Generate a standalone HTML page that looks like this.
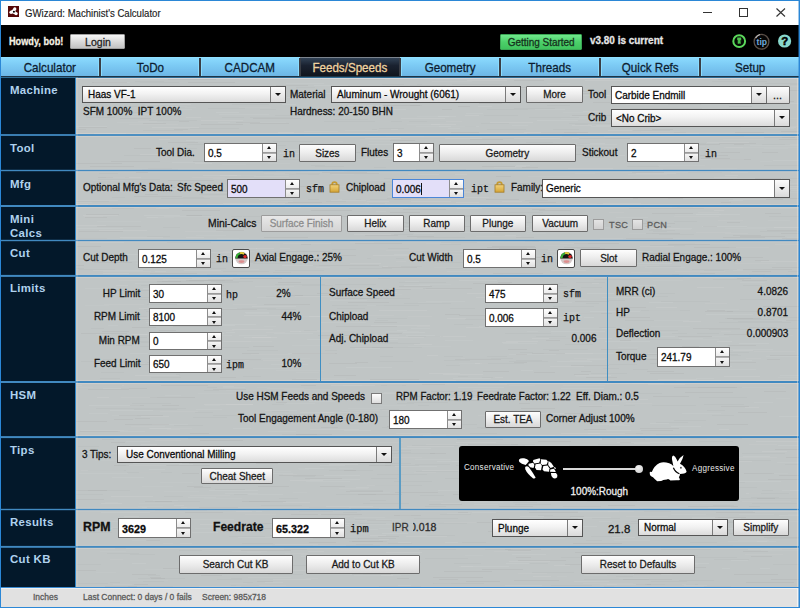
<!DOCTYPE html><html><head><meta charset="utf-8"><style>
*{margin:0;padding:0;box-sizing:content-box}
html,body{width:800px;height:608px;overflow:hidden;background:#fff}
#w{position:absolute;left:0;top:0;width:800px;height:608px;overflow:hidden}
.T{position:absolute;white-space:nowrap;height:0;line-height:0}
.T>span{display:inline-block;white-space:nowrap;-webkit-text-stroke:0.28px currentColor}
.sp,.cb,.bt{position:absolute;border:1px solid #555}
.sp{background:#fff}
.spb{position:absolute;right:0;top:0;border-left:1px solid #8c8c8c}
.spb .up,.spb .dn{position:absolute;left:0;right:0;height:50%}
.spb .up{top:0;border-bottom:1px solid #9a9a9a;box-sizing:border-box;background:linear-gradient(#ffffff,#ececec)}
.spb .dn{bottom:0;background:linear-gradient(#f4f4f4,#e0e0e0);border-top:1px solid #b0b0b0;box-sizing:border-box}
.spb .up:after,.spb .dn:after{content:"";position:absolute;left:50%;top:50%;margin-left:-2.5px;border-left:2.5px solid transparent;border-right:2.5px solid transparent}
.spb .up:after{border-bottom:3px solid #111;margin-top:-2px}
.spb .dn:after{border-top:3px solid #111;margin-top:-1px}
.cb{background:linear-gradient(#ffffff,#f2f2f2 45%,#dcdcdc)}
.cbb{position:absolute;right:0;top:0;border-left:1px solid #7a7a7a;background:linear-gradient(#fbfbfb,#dadada)}
.tri{position:absolute;left:50%;top:50%;margin-left:-3px;margin-top:-2px;border-left:3px solid transparent;border-right:3px solid transparent;border-top:3px solid #111}
.bt{background:linear-gradient(#fdfdfd,#eeeeee 45%,#d8d8d8);border-color:#6c6c6c;border-radius:1px}
</style></head><body><div id="w"><div style="position:absolute;left:0px;top:0px;width:800px;height:608px;background:#c0c5c5;"></div>
<svg style="position:absolute;left:0;top:0" width="800" height="608"><path fill="#000" fill-opacity=".03" d="M533 521h45v1h-45zM264 528h25v1h-25zM721 202h10v1h-10zM707 310h18v1h-18zM164 263h18v1h-18zM581 371h10v1h-10zM162 405h17v1h-17zM785 135h41v1h-41zM764 391h22v1h-22zM111 442h14v1h-14zM493 273h50v1h-50zM527 133h50v1h-50zM455 359h46v1h-46zM288 202h34v1h-34zM551 154h43v1h-43zM574 374h15v1h-15zM694 184h29v1h-29zM708 206h22v1h-22zM168 180h46v1h-46zM188 438h42v1h-42zM584 429h22v1h-22zM178 90h12v1h-12zM663 109h18v1h-18zM586 377h31v1h-31zM485 146h31v1h-31zM579 406h23v1h-23zM352 541h31v1h-31zM564 413h27v1h-27zM116 345h16v1h-16zM562 136h42v1h-42zM633 198h50v1h-50zM206 507h14v1h-14zM507 412h33v1h-33zM781 233h41v1h-41zM250 123h39v1h-39zM651 229h11v1h-11zM473 257h31v1h-31zM73 490h34v1h-34zM292 379h25v1h-25zM482 166h29v1h-29zM336 326h35v1h-35zM479 103h23v1h-23zM743 551h25v1h-25zM496 176h15v1h-15zM700 155h28v1h-28zM407 236h27v1h-27zM732 183h19v1h-19zM564 247h36v1h-36zM746 582h48v1h-48zM482 569h41v1h-41zM423 288h49v1h-49zM358 326h39v1h-39zM513 452h34v1h-34zM318 335h35v1h-35zM781 131h43v1h-43zM742 280h25v1h-25zM735 132h29v1h-29zM345 170h25v1h-25zM378 536h21v1h-21zM131 170h14v1h-14zM398 415h40v1h-40zM310 420h38v1h-38zM311 210h41v1h-41zM88 389h41v1h-41zM782 238h49v1h-49zM498 314h15v1h-15zM322 172h45v1h-45zM278 282h23v1h-23zM403 209h43v1h-43zM752 271h19v1h-19zM641 430h32v1h-32zM429 418h25v1h-25zM470 139h33v1h-33zM727 318h34v1h-34zM352 112h39v1h-39zM464 97h18v1h-18zM766 190h25v1h-25zM150 397h45v1h-45zM340 255h16v1h-16zM234 159h31v1h-31zM134 584h14v1h-14zM185 512h38v1h-38zM111 161h49v1h-49zM193 285h31v1h-31zM522 167h16v1h-16zM367 520h25v1h-25zM242 353h17v1h-17zM467 448h33v1h-33zM355 112h30v1h-30zM92 82h35v1h-35zM763 277h30v1h-30zM729 106h23v1h-23zM499 506h34v1h-34zM619 317h31v1h-31zM262 455h40v1h-40zM123 522h18v1h-18zM187 486h16v1h-16zM136 172h12v1h-12zM143 123h23v1h-23zM188 210h32v1h-32zM363 565h15v1h-15zM685 190h38v1h-38zM499 248h28v1h-28zM132 574h24v1h-24zM73 163h49v1h-49zM313 144h15v1h-15zM150 187h26v1h-26zM565 564h24v1h-24zM444 571h48v1h-48zM579 138h43v1h-43zM346 491h37v1h-37zM157 281h24v1h-24zM103 240h19v1h-19zM727 222h13v1h-13zM663 357h10v1h-10zM525 241h14v1h-14zM575 301h34v1h-34zM177 359h20v1h-20zM276 85h32v1h-32zM456 380h43v1h-43zM658 101h26v1h-26zM136 364h21v1h-21zM105 586h32v1h-32zM274 518h44v1h-44zM193 161h22v1h-22zM90 166h44v1h-44zM617 462h47v1h-47zM383 105h37v1h-37zM772 267h32v1h-32zM654 151h43v1h-43zM693 328h47v1h-47zM532 323h24v1h-24zM115 290h45v1h-45zM755 260h14v1h-14zM312 147h25v1h-25zM350 347h43v1h-43zM764 90h38v1h-38zM240 260h19v1h-19zM549 338h45v1h-45zM115 548h11v1h-11zM552 483h49v1h-49zM182 210h28v1h-28zM330 173h49v1h-49zM652 213h41v1h-41zM190 433h19v1h-19zM97 226h44v1h-44zM714 362h42v1h-42zM634 574h27v1h-27zM344 470h12v1h-12zM482 495h25v1h-25zM321 514h41v1h-41zM333 95h15v1h-15zM764 537h42v1h-42zM301 385h15v1h-15zM737 278h14v1h-14zM668 244h42v1h-42zM650 253h43v1h-43zM241 550h50v1h-50zM749 327h28v1h-28zM762 152h16v1h-16zM79 231h44v1h-44zM620 340h11v1h-11zM722 484h11v1h-11zM709 438h33v1h-33zM397 154h31v1h-31zM115 381h32v1h-32zM114 419h19v1h-19zM264 237h44v1h-44zM705 311h28v1h-28zM640 428h39v1h-39zM146 134h25v1h-25zM468 444h50v1h-50zM760 333h23v1h-23zM276 402h11v1h-11zM646 233h34v1h-34zM460 226h17v1h-17zM189 92h33v1h-33zM81 333h46v1h-46zM242 501h44v1h-44zM98 177h31v1h-31zM640 579h17v1h-17zM674 387h46v1h-46zM741 109h37v1h-37zM187 78h10v1h-10zM544 516h40v1h-40zM125 424h44v1h-44zM524 474h28v1h-28zM181 361h12v1h-12zM679 458h26v1h-26zM201 124h42v1h-42zM486 199h33v1h-33zM652 129h21v1h-21zM571 193h16v1h-16zM786 320h22v1h-22zM701 158h29v1h-29zM601 349h36v1h-36zM647 371h27v1h-27zM492 246h43v1h-43zM179 358h18v1h-18zM73 570h23v1h-23zM711 159h40v1h-40zM498 282h14v1h-14zM384 289h27v1h-27zM760 101h31v1h-31zM77 246h24v1h-24zM779 475h27v1h-27zM690 438h32v1h-32zM153 537h26v1h-26zM591 468h27v1h-27zM248 193h17v1h-17zM118 535h47v1h-47zM761 180h30v1h-30zM130 405h14v1h-14zM767 359h13v1h-13zM685 392h48v1h-48zM442 109h10v1h-10zM417 396h22v1h-22zM301 244h10v1h-10zM207 274h30v1h-30zM284 533h26v1h-26zM161 385h47v1h-47zM764 137h31v1h-31zM608 505h27v1h-27zM71 129h15v1h-15zM133 319h20v1h-20zM320 229h19v1h-19zM768 99h10v1h-10zM636 584h15v1h-15zM716 512h39v1h-39zM717 522h20v1h-20zM369 465h22v1h-22zM445 314h15v1h-15zM283 456h15v1h-15zM653 396h36v1h-36zM134 148h17v1h-17zM645 226h26v1h-26zM253 346h21v1h-21zM365 235h33v1h-33zM632 172h32v1h-32zM305 478h37v1h-37zM688 506h50v1h-50zM240 278h42v1h-42zM502 257h48v1h-48zM312 395h44v1h-44zM473 283h37v1h-37zM352 574h11v1h-11zM270 535h26v1h-26zM744 473h30v1h-30zM88 204h30v1h-30zM770 355h37v1h-37zM576 313h36v1h-36zM224 359h37v1h-37zM636 492h47v1h-47zM763 306h43v1h-43zM146 540h14v1h-14zM532 209h13v1h-13zM765 331h12v1h-12zM213 389h33v1h-33zM508 550h23v1h-23zM346 545h34v1h-34zM717 119h19v1h-19zM529 202h27v1h-27zM71 265h13v1h-13zM694 247h42v1h-42zM745 101h49v1h-49zM593 102h36v1h-36zM752 186h26v1h-26zM537 151h17v1h-17zM786 457h29v1h-29zM397 578h12v1h-12zM649 495h15v1h-15zM348 302h41v1h-41zM291 514h27v1h-27zM374 322h23v1h-23zM571 365h38v1h-38zM339 265h40v1h-40zM678 336h34v1h-34zM201 575h21v1h-21zM158 316h20v1h-20zM312 382h46v1h-46zM221 257h18v1h-18zM296 434h36v1h-36zM387 426h48v1h-48zM186 258h19v1h-19zM682 346h17v1h-17zM80 431h40v1h-40zM351 567h43v1h-43zM719 387h18v1h-18zM182 473h17v1h-17zM358 538h38v1h-38zM584 185h25v1h-25zM552 188h47v1h-47zM168 142h30v1h-30zM610 102h35v1h-35zM767 230h30v1h-30zM650 373h34v1h-34zM158 535h29v1h-29zM459 315h30v1h-30zM719 143h37v1h-37zM120 118h31v1h-31zM355 362h13v1h-13zM460 391h39v1h-39zM174 129h14v1h-14zM370 379h49v1h-49zM700 273h15v1h-15zM715 517h31v1h-31zM134 196h48v1h-48zM351 508h28v1h-28zM159 330h17v1h-17zM222 309h35v1h-35zM735 99h17v1h-17zM633 483h36v1h-36zM602 438h14v1h-14zM743 269h49v1h-49zM777 240h35v1h-35zM85 217h22v1h-22zM688 528h40v1h-40zM448 92h26v1h-26zM416 169h50v1h-50zM575 552h36v1h-36zM574 243h45v1h-45zM521 87h33v1h-33zM620 442h11v1h-11zM626 238h47v1h-47zM501 289h42v1h-42zM726 97h44v1h-44zM253 118h48v1h-48zM457 439h46v1h-46zM519 403h11v1h-11zM492 166h23v1h-23zM511 183h18v1h-18zM102 331h27v1h-27zM200 440h43v1h-43zM379 562h42v1h-42zM313 448h30v1h-30zM586 138h44v1h-44zM236 122h24v1h-24zM740 236h45v1h-45zM775 449h46v1h-46zM646 221h10v1h-10zM633 223h42v1h-42zM650 470h41v1h-41zM335 298h44v1h-44zM514 362h13v1h-13zM749 274h16v1h-16zM394 515h27v1h-27zM774 198h26v1h-26zM405 410h24v1h-24zM734 574h44v1h-44zM168 79h48v1h-48zM321 427h17v1h-17zM488 531h19v1h-19zM461 460h46v1h-46zM636 359h29v1h-29zM458 106h12v1h-12zM355 574h36v1h-36zM277 295h26v1h-26zM358 494h44v1h-44zM163 568h49v1h-49zM429 504h33v1h-33zM94 262h38v1h-38zM766 199h17v1h-17zM241 523h32v1h-32zM721 406h28v1h-28zM395 492h43v1h-43zM256 463h22v1h-22zM454 215h33v1h-33zM254 395h42v1h-42zM650 274h29v1h-29zM516 354h11v1h-11zM145 501h27v1h-27zM186 280h47v1h-47zM216 230h28v1h-28zM751 556h21v1h-21zM179 121h10v1h-10zM430 453h16v1h-16zM159 365h38v1h-38zM545 393h20v1h-20zM549 350h10v1h-10zM261 225h43v1h-43zM734 144h10v1h-10zM433 419h19v1h-19zM602 439h43v1h-43zM258 486h31v1h-31zM329 363h28v1h-28zM574 90h10v1h-10zM577 143h13v1h-13zM613 135h48v1h-48zM394 199h17v1h-17zM151 578h14v1h-14zM622 307h24v1h-24zM313 265h29v1h-29zM779 139h26v1h-26zM674 355h14v1h-14zM355 243h47v1h-47zM382 267h35v1h-35zM466 581h34v1h-34zM71 421h36v1h-36zM645 354h15v1h-15zM483 371h26v1h-26zM463 490h11v1h-11zM292 353h45v1h-45zM79 127h28v1h-28zM128 458h12v1h-12zM497 399h40v1h-40zM243 501h21v1h-21zM696 144h24v1h-24zM491 291h10v1h-10zM573 543h49v1h-49zM710 136h34v1h-34zM132 327h24v1h-24zM724 334h44v1h-44zM194 487h17v1h-17zM443 400h41v1h-41zM184 275h41v1h-41zM150 273h47v1h-47zM135 418h15v1h-15zM514 80h30v1h-30zM186 215h16v1h-16zM487 247h49v1h-49zM121 388h26v1h-26zM738 412h29v1h-29zM755 178h26v1h-26zM516 557h15v1h-15zM718 79h13v1h-13zM549 448h48v1h-48zM544 196h43v1h-43zM545 479h15v1h-15zM166 465h44v1h-44zM717 424h31v1h-31zM717 152h17v1h-17zM317 293h36v1h-36zM188 82h47v1h-47zM161 91h19v1h-19zM309 542h27v1h-27zM231 261h46v1h-46zM119 415h44v1h-44zM605 380h45v1h-45zM257 399h23v1h-23zM585 455h30v1h-30zM444 188h22v1h-22zM114 465h15v1h-15zM433 577h50v1h-50zM514 580h45v1h-45zM677 567h29v1h-29zM390 212h30v1h-30zM285 251h45v1h-45zM707 152h33v1h-33zM150 577h11v1h-11zM86 214h33v1h-33zM508 349h19v1h-19zM439 579h19v1h-19zM733 235h25v1h-25zM350 95h42v1h-42zM263 454h50v1h-50zM142 462h28v1h-28zM505 549h36v1h-36zM518 560h48v1h-48zM757 498h18v1h-18zM145 194h13v1h-13zM279 475h45v1h-45zM775 78h49v1h-49zM285 215h13v1h-13zM521 408h34v1h-34zM179 183h14v1h-14zM399 286h33v1h-33zM257 581h16v1h-16zM136 275h36v1h-36zM555 91h42v1h-42zM451 132h28v1h-28zM534 372h21v1h-21zM125 95h34v1h-34zM569 93h37v1h-37zM320 486h25v1h-25zM765 213h16v1h-16zM541 132h47v1h-47zM264 304h46v1h-46zM771 579h37v1h-37zM422 384h23v1h-23zM313 152h47v1h-47zM539 210h32v1h-32zM516 237h18v1h-18zM694 472h17v1h-17zM728 345h28v1h-28zM390 140h25v1h-25zM387 198h41v1h-41zM656 117h26v1h-26zM713 257h50v1h-50zM703 226h14v1h-14zM222 531h16v1h-16zM286 186h30v1h-30zM308 258h35v1h-35zM477 522h29v1h-29zM458 512h10v1h-10zM220 377h16v1h-16zM569 154h47v1h-47zM403 206h45v1h-45zM529 512h49v1h-49zM286 135h18v1h-18zM334 375h22v1h-22zM546 340h14v1h-14zM686 488h36v1h-36zM657 449h38v1h-38zM339 216h47v1h-47zM291 170h35v1h-35zM532 353h33v1h-33zM76 499h28v1h-28zM453 494h25v1h-25zM623 579h49v1h-49zM723 237h42v1h-42zM768 479h34v1h-34zM663 169h27v1h-27zM173 326h46v1h-46zM199 507h39v1h-39zM538 441h33v1h-33zM547 223h36v1h-36zM743 235h18v1h-18zM404 425h38v1h-38zM572 115h46v1h-46zM444 99h39v1h-39zM388 333h14v1h-14z"/><path fill="#fff" fill-opacity=".08" d="M532 338h47v1h-47zM538 413h27v1h-27zM551 270h35v1h-35zM568 168h45v1h-45zM465 115h14v1h-14zM501 102h16v1h-16zM331 200h35v1h-35zM275 528h23v1h-23zM585 80h48v1h-48zM572 125h20v1h-20zM607 240h16v1h-16zM177 333h47v1h-47zM93 270h50v1h-50zM700 159h44v1h-44zM723 189h43v1h-43zM506 341h32v1h-32zM653 171h44v1h-44zM509 561h41v1h-41zM724 376h36v1h-36zM97 397h12v1h-12zM469 492h19v1h-19zM401 118h44v1h-44zM539 240h24v1h-24zM135 375h44v1h-44zM495 158h30v1h-30zM204 404h49v1h-49zM561 433h39v1h-39zM456 442h40v1h-40zM533 576h18v1h-18zM73 225h33v1h-33zM441 503h20v1h-20zM414 344h18v1h-18zM514 138h46v1h-46zM398 542h13v1h-13zM170 344h18v1h-18zM264 203h21v1h-21zM656 307h21v1h-21zM457 208h25v1h-25zM785 188h12v1h-12zM348 105h34v1h-34zM73 200h45v1h-45zM113 177h28v1h-28zM488 325h12v1h-12zM475 363h13v1h-13zM437 90h45v1h-45zM563 283h36v1h-36zM91 528h21v1h-21zM520 516h50v1h-50zM610 399h38v1h-38zM600 491h32v1h-32zM697 287h27v1h-27zM467 293h27v1h-27zM244 315h42v1h-42zM94 133h32v1h-32zM378 337h46v1h-46zM484 134h41v1h-41zM406 536h41v1h-41zM473 398h29v1h-29zM120 237h43v1h-43zM124 516h15v1h-15zM658 379h39v1h-39zM456 202h23v1h-23zM466 327h17v1h-17zM591 155h34v1h-34zM379 539h10v1h-10zM259 199h49v1h-49zM371 325h48v1h-48zM381 575h12v1h-12zM245 556h30v1h-30zM719 429h10v1h-10zM748 332h35v1h-35zM581 485h24v1h-24zM757 116h24v1h-24zM422 470h37v1h-37zM443 374h40v1h-40zM291 272h27v1h-27zM522 547h46v1h-46zM437 192h45v1h-45zM236 511h16v1h-16zM440 336h26v1h-26zM640 246h34v1h-34zM728 546h48v1h-48zM467 80h40v1h-40zM768 127h28v1h-28zM524 154h46v1h-46zM111 496h42v1h-42zM354 234h40v1h-40zM198 252h50v1h-50zM431 124h25v1h-25zM186 237h18v1h-18zM143 288h25v1h-25zM683 321h18v1h-18zM774 227h31v1h-31zM379 310h48v1h-48zM171 340h18v1h-18zM407 446h47v1h-47zM575 375h36v1h-36zM314 393h24v1h-24zM379 393h45v1h-45zM429 373h31v1h-31zM275 544h43v1h-43zM764 186h45v1h-45zM445 138h37v1h-37zM159 139h11v1h-11zM753 511h45v1h-45zM648 384h37v1h-37zM232 329h41v1h-41zM411 201h40v1h-40zM201 120h42v1h-42zM634 443h16v1h-16zM329 464h29v1h-29zM139 308h24v1h-24zM309 316h42v1h-42zM139 472h22v1h-22zM141 416h28v1h-28zM283 502h27v1h-27zM317 316h12v1h-12zM310 429h49v1h-49zM762 329h20v1h-20zM554 565h16v1h-16zM99 230h48v1h-48zM531 301h13v1h-13zM157 294h50v1h-50zM287 97h24v1h-24zM377 129h21v1h-21zM595 95h27v1h-27zM746 493h15v1h-15zM687 454h31v1h-31zM370 535h16v1h-16zM707 142h42v1h-42zM252 337h25v1h-25zM762 451h25v1h-25zM608 130h24v1h-24zM714 210h10v1h-10zM99 436h33v1h-33zM680 480h12v1h-12zM290 331h11v1h-11zM308 551h16v1h-16zM745 407h14v1h-14zM676 78h13v1h-13zM326 506h47v1h-47zM493 377h10v1h-10zM141 444h16v1h-16zM476 297h15v1h-15zM321 412h29v1h-29zM257 257h43v1h-43zM365 448h12v1h-12zM595 338h17v1h-17zM647 185h37v1h-37zM252 306h44v1h-44zM195 163h17v1h-17zM543 189h22v1h-22zM329 312h34v1h-34zM400 325h30v1h-30zM174 505h10v1h-10zM583 111h17v1h-17zM550 366h34v1h-34zM140 154h18v1h-18zM273 579h38v1h-38zM101 503h21v1h-21zM116 285h12v1h-12zM713 461h39v1h-39zM515 166h11v1h-11zM184 270h37v1h-37zM636 173h40v1h-40zM479 326h31v1h-31zM789 381h32v1h-32zM524 132h40v1h-40zM478 106h14v1h-14zM265 410h32v1h-32zM244 248h30v1h-30zM603 203h38v1h-38zM756 441h45v1h-45zM733 350h20v1h-20zM145 104h46v1h-46zM463 459h50v1h-50zM331 385h50v1h-50zM427 355h11v1h-11zM387 547h17v1h-17zM186 117h36v1h-36zM725 175h13v1h-13zM615 508h28v1h-28zM708 381h12v1h-12zM200 524h31v1h-31zM706 462h21v1h-21zM350 263h31v1h-31zM633 160h38v1h-38zM366 206h27v1h-27zM447 318h19v1h-19zM103 273h26v1h-26zM502 201h20v1h-20zM131 334h39v1h-39zM490 122h43v1h-43zM530 229h20v1h-20zM373 255h39v1h-39zM650 547h11v1h-11zM568 313h33v1h-33zM646 567h43v1h-43zM278 132h16v1h-16zM304 525h45v1h-45zM620 383h44v1h-44zM383 266h18v1h-18zM645 257h23v1h-23zM346 201h43v1h-43zM761 261h36v1h-36zM279 153h35v1h-35zM290 480h33v1h-33zM344 523h16v1h-16zM717 341h15v1h-15zM301 171h46v1h-46zM295 296h40v1h-40zM386 552h36v1h-36zM290 546h20v1h-20zM686 525h38v1h-38zM421 225h16v1h-16zM83 215h35v1h-35zM152 127h47v1h-47zM319 416h32v1h-32zM502 342h16v1h-16zM505 235h11v1h-11z"/><path fill="#000" fill-opacity=".02" d="M557 400h49v1h-49zM679 580h35v1h-35zM404 303h47v1h-47zM410 85h36v1h-36zM189 280h36v1h-36zM285 173h35v1h-35zM388 543h24v1h-24zM264 159h50v1h-50zM773 564h34v1h-34zM199 194h40v1h-40zM356 186h23v1h-23zM250 222h33v1h-33zM742 453h43v1h-43zM149 524h36v1h-36zM458 376h10v1h-10zM624 120h43v1h-43zM654 259h29v1h-29zM342 199h19v1h-19zM332 169h10v1h-10zM253 193h27v1h-27zM247 350h31v1h-31zM609 364h28v1h-28zM115 342h35v1h-35zM293 476h22v1h-22zM515 504h36v1h-36zM275 284h50v1h-50zM231 585h28v1h-28zM452 84h50v1h-50zM485 549h22v1h-22zM714 559h35v1h-35zM356 544h17v1h-17zM80 532h32v1h-32zM658 89h17v1h-17zM332 305h35v1h-35zM603 368h16v1h-16zM465 319h20v1h-20zM124 537h30v1h-30zM217 579h25v1h-25zM210 565h28v1h-28zM351 217h49v1h-49zM584 579h22v1h-22zM354 115h15v1h-15zM403 226h45v1h-45zM147 236h23v1h-23zM324 121h33v1h-33zM442 424h35v1h-35zM647 266h34v1h-34zM391 121h11v1h-11zM624 405h11v1h-11zM182 293h36v1h-36zM380 409h19v1h-19zM610 484h43v1h-43zM450 308h25v1h-25zM124 155h46v1h-46zM279 498h19v1h-19zM430 216h49v1h-49zM147 362h29v1h-29zM762 314h17v1h-17zM186 312h10v1h-10zM415 464h35v1h-35zM706 126h18v1h-18zM419 549h37v1h-37zM697 436h30v1h-30zM370 500h16v1h-16zM329 470h44v1h-44zM431 391h42v1h-42zM598 444h22v1h-22zM712 415h22v1h-22zM242 543h31v1h-31zM385 465h34v1h-34zM610 275h17v1h-17zM410 105h12v1h-12zM629 293h46v1h-46zM735 460h36v1h-36zM216 556h40v1h-40zM553 86h21v1h-21zM350 523h36v1h-36zM349 268h43v1h-43zM99 173h19v1h-19zM587 501h50v1h-50zM337 96h22v1h-22zM652 405h44v1h-44zM672 333h15v1h-15zM207 152h39v1h-39zM73 201h36v1h-36zM148 575h12v1h-12zM372 207h17v1h-17zM482 377h13v1h-13zM543 518h35v1h-35zM553 306h41v1h-41zM594 279h46v1h-46zM210 470h25v1h-25zM375 416h14v1h-14zM406 223h41v1h-41zM377 318h30v1h-30zM649 230h26v1h-26zM101 372h23v1h-23zM705 355h36v1h-36zM282 434h35v1h-35zM440 244h21v1h-21zM257 248h23v1h-23zM651 581h36v1h-36zM707 457h27v1h-27zM275 270h49v1h-49zM660 277h23v1h-23zM444 360h26v1h-26zM135 81h29v1h-29zM576 282h29v1h-29zM167 242h44v1h-44zM581 287h21v1h-21zM117 382h13v1h-13zM183 197h21v1h-21zM127 472h45v1h-45zM107 553h32v1h-32zM786 239h50v1h-50zM781 185h21v1h-21zM384 178h10v1h-10zM438 523h29v1h-29zM369 416h10v1h-10zM674 420h32v1h-32zM513 502h24v1h-24zM128 112h39v1h-39zM749 493h40v1h-40zM616 576h17v1h-17zM547 105h23v1h-23zM585 157h19v1h-19zM486 394h49v1h-49zM455 158h28v1h-28zM211 368h42v1h-42zM79 269h36v1h-36zM481 123h28v1h-28zM418 405h11v1h-11zM498 249h50v1h-50zM456 465h38v1h-38zM752 503h45v1h-45zM169 290h30v1h-30zM174 425h29v1h-29zM379 128h25v1h-25zM204 390h15v1h-15zM649 450h32v1h-32zM633 134h46v1h-46zM697 333h22v1h-22zM332 249h24v1h-24zM624 564h19v1h-19zM181 135h29v1h-29zM494 94h19v1h-19zM70 268h14v1h-14zM658 208h46v1h-46zM279 423h12v1h-12zM458 542h28v1h-28zM215 489h30v1h-30zM446 268h17v1h-17zM143 581h21v1h-21zM86 117h29v1h-29zM234 572h31v1h-31zM480 455h23v1h-23zM295 295h41v1h-41zM573 197h49v1h-49zM184 332h42v1h-42zM112 208h22v1h-22zM732 188h38v1h-38zM771 204h27v1h-27zM729 521h14v1h-14zM707 410h18v1h-18zM516 522h36v1h-36zM618 103h40v1h-40zM372 347h50v1h-50zM486 549h25v1h-25zM670 355h36v1h-36zM263 171h13v1h-13zM132 299h16v1h-16zM328 532h13v1h-13zM505 333h46v1h-46zM470 451h39v1h-39zM591 373h36v1h-36zM514 108h41v1h-41zM487 356h20v1h-20zM543 349h45v1h-45zM367 258h37v1h-37zM743 285h19v1h-19zM91 328h13v1h-13zM751 497h28v1h-28zM293 511h40v1h-40zM249 501h21v1h-21zM554 259h48v1h-48zM304 330h13v1h-13zM378 278h12v1h-12zM162 281h42v1h-42zM626 296h42v1h-42zM366 342h32v1h-32zM645 584h37v1h-37zM661 549h50v1h-50zM295 447h23v1h-23zM388 248h21v1h-21zM730 568h30v1h-30zM397 403h17v1h-17zM672 274h17v1h-17zM704 270h20v1h-20zM686 584h12v1h-12zM275 115h50v1h-50zM223 271h46v1h-46zM369 203h16v1h-16zM713 279h31v1h-31zM309 507h40v1h-40zM335 284h41v1h-41zM273 272h45v1h-45zM550 585h42v1h-42zM511 444h24v1h-24zM501 289h21v1h-21zM656 422h32v1h-32zM100 378h20v1h-20zM193 268h33v1h-33zM477 427h40v1h-40zM190 101h35v1h-35zM388 266h34v1h-34zM236 147h17v1h-17zM551 283h23v1h-23zM597 564h44v1h-44zM148 168h24v1h-24zM644 511h27v1h-27zM149 120h48v1h-48zM206 262h49v1h-49zM371 567h15v1h-15zM554 145h30v1h-30zM164 496h19v1h-19zM176 510h31v1h-31zM141 256h27v1h-27zM252 437h41v1h-41zM536 336h30v1h-30zM103 359h15v1h-15zM553 129h26v1h-26zM375 385h31v1h-31zM194 312h29v1h-29zM481 480h45v1h-45zM422 275h27v1h-27zM760 231h39v1h-39zM701 352h48v1h-48zM542 452h13v1h-13zM176 374h34v1h-34zM526 142h27v1h-27zM607 300h18v1h-18zM741 498h31v1h-31zM766 498h45v1h-45zM73 583h35v1h-35zM210 191h36v1h-36zM762 490h11v1h-11zM724 114h32v1h-32zM709 329h41v1h-41zM81 361h30v1h-30zM659 234h35v1h-35zM427 535h28v1h-28zM323 460h16v1h-16zM296 87h19v1h-19zM391 234h22v1h-22zM544 93h32v1h-32zM179 550h23v1h-23zM341 79h44v1h-44zM529 563h19v1h-19zM273 141h40v1h-40zM496 518h13v1h-13zM311 165h14v1h-14zM261 505h41v1h-41zM587 395h19v1h-19zM586 303h13v1h-13zM181 148h16v1h-16zM525 361h20v1h-20zM642 254h36v1h-36zM666 91h26v1h-26zM387 453h17v1h-17zM713 505h21v1h-21zM707 196h47v1h-47zM240 446h24v1h-24zM372 343h48v1h-48zM764 165h45v1h-45zM669 555h29v1h-29zM529 117h50v1h-50zM698 354h40v1h-40zM769 216h31v1h-31zM704 404h40v1h-40zM644 197h19v1h-19zM572 498h49v1h-49zM674 132h12v1h-12zM408 336h35v1h-35zM405 153h39v1h-39zM611 205h11v1h-11zM140 346h32v1h-32zM474 191h18v1h-18zM688 172h43v1h-43zM155 501h45v1h-45zM315 166h29v1h-29zM138 297h46v1h-46zM738 321h44v1h-44zM425 558h43v1h-43zM586 540h16v1h-16zM577 248h28v1h-28zM561 557h34v1h-34zM548 195h23v1h-23zM767 538h32v1h-32zM270 565h37v1h-37zM650 245h35v1h-35zM407 402h41v1h-41zM451 91h43v1h-43zM740 299h43v1h-43zM146 311h26v1h-26zM727 311h38v1h-38zM380 356h13v1h-13zM661 301h49v1h-49zM243 216h45v1h-45zM154 337h49v1h-49zM272 545h41v1h-41zM699 441h34v1h-34zM374 167h12v1h-12zM721 462h14v1h-14zM334 119h34v1h-34zM538 515h15v1h-15zM253 404h31v1h-31zM635 120h30v1h-30zM134 409h27v1h-27zM698 387h44v1h-44zM375 320h13v1h-13zM163 227h17v1h-17zM719 322h46v1h-46zM700 102h35v1h-35zM143 130h40v1h-40zM82 385h40v1h-40zM211 281h42v1h-42zM629 208h50v1h-50zM625 433h18v1h-18zM158 409h19v1h-19zM532 572h42v1h-42zM424 135h34v1h-34zM624 393h38v1h-38zM336 494h40v1h-40zM301 382h41v1h-41zM465 428h39v1h-39zM132 337h15v1h-15zM151 377h30v1h-30zM262 511h48v1h-48zM731 81h36v1h-36zM187 215h24v1h-24zM201 117h43v1h-43zM563 506h38v1h-38zM98 179h32v1h-32zM293 199h26v1h-26zM77 238h46v1h-46zM696 143h10v1h-10zM138 578h47v1h-47zM355 519h21v1h-21zM110 582h10v1h-10zM282 414h29v1h-29zM569 123h43v1h-43zM398 452h13v1h-13zM627 166h32v1h-32zM445 478h24v1h-24zM785 464h47v1h-47zM400 453h35v1h-35zM487 109h41v1h-41zM451 126h25v1h-25zM409 121h37v1h-37zM622 579h27v1h-27zM736 487h21v1h-21zM370 199h33v1h-33zM454 563h27v1h-27zM682 420h22v1h-22zM592 98h11v1h-11zM77 564h24v1h-24zM635 181h10v1h-10zM152 453h45v1h-45zM231 578h11v1h-11zM399 282h47v1h-47zM186 275h49v1h-49zM233 459h34v1h-34zM651 184h37v1h-37zM337 308h28v1h-28zM561 283h31v1h-31zM695 557h42v1h-42zM147 304h30v1h-30zM113 528h14v1h-14zM144 309h13v1h-13zM253 263h43v1h-43zM382 84h40v1h-40zM630 108h48v1h-48zM138 341h34v1h-34zM527 510h10v1h-10zM633 130h37v1h-37zM401 229h34v1h-34zM389 258h11v1h-11zM385 463h26v1h-26zM207 387h10v1h-10zM210 87h48v1h-48zM416 471h42v1h-42zM377 474h50v1h-50zM112 197h13v1h-13zM633 369h15v1h-15zM78 446h21v1h-21zM289 174h30v1h-30zM474 583h10v1h-10zM272 411h17v1h-17zM676 108h26v1h-26zM762 144h42v1h-42zM555 286h12v1h-12zM509 286h42v1h-42zM229 536h36v1h-36zM782 137h19v1h-19zM251 152h19v1h-19zM605 554h35v1h-35zM779 317h25v1h-25zM302 285h31v1h-31zM124 102h28v1h-28zM452 395h30v1h-30zM607 563h44v1h-44zM321 399h45v1h-45zM620 102h43v1h-43zM446 365h14v1h-14zM584 468h41v1h-41zM705 533h35v1h-35zM207 190h27v1h-27zM606 184h22v1h-22zM465 358h48v1h-48zM141 285h36v1h-36zM425 260h16v1h-16zM658 98h22v1h-22zM284 549h23v1h-23zM577 473h39v1h-39zM766 328h37v1h-37zM250 117h43v1h-43zM604 586h27v1h-27zM128 586h45v1h-45zM345 560h26v1h-26zM325 350h12v1h-12zM343 512h14v1h-14zM140 408h46v1h-46zM470 433h27v1h-27zM692 269h45v1h-45zM790 84h39v1h-39zM525 200h23v1h-23zM88 490h42v1h-42zM349 541h38v1h-38zM266 296h13v1h-13zM155 510h40v1h-40zM441 242h36v1h-36zM540 491h40v1h-40zM334 510h27v1h-27zM187 144h37v1h-37zM653 231h14v1h-14zM591 536h29v1h-29zM260 109h16v1h-16zM425 506h21v1h-21zM446 159h44v1h-44zM420 495h24v1h-24zM142 169h36v1h-36zM321 79h24v1h-24zM789 135h20v1h-20zM147 334h20v1h-20zM647 570h26v1h-26zM565 344h28v1h-28zM88 470h38v1h-38zM625 523h25v1h-25zM749 506h11v1h-11zM203 347h46v1h-46zM379 226h17v1h-17zM326 201h41v1h-41zM597 566h19v1h-19zM313 538h46v1h-46zM110 179h50v1h-50zM640 571h14v1h-14zM385 222h16v1h-16zM375 485h47v1h-47zM786 274h45v1h-45zM231 216h11v1h-11zM234 494h14v1h-14zM494 394h45v1h-45zM677 207h16v1h-16zM243 376h18v1h-18zM788 271h16v1h-16zM599 327h17v1h-17zM480 363h44v1h-44zM132 403h39v1h-39zM484 115h34v1h-34zM363 503h46v1h-46zM625 320h29v1h-29zM612 521h30v1h-30zM417 237h48v1h-48zM575 124h13v1h-13zM690 542h27v1h-27zM542 585h41v1h-41zM440 514h31v1h-31zM111 316h36v1h-36zM454 324h19v1h-19zM754 381h17v1h-17zM674 221h23v1h-23zM592 518h28v1h-28zM414 518h44v1h-44zM520 352h13v1h-13zM725 318h28v1h-28zM139 207h20v1h-20zM444 356h19v1h-19zM417 217h21v1h-21zM243 582h10v1h-10zM262 97h28v1h-28zM418 152h11v1h-11zM268 145h18v1h-18zM268 574h35v1h-35zM216 282h23v1h-23zM379 586h42v1h-42zM267 309h29v1h-29zM733 319h41v1h-41zM412 445h46v1h-46zM195 412h18v1h-18zM650 363h46v1h-46zM213 415h41v1h-41zM701 482h44v1h-44zM413 182h20v1h-20zM239 87h15v1h-15zM509 361h48v1h-48zM669 170h12v1h-12zM455 262h30v1h-30zM361 450h50v1h-50zM130 554h25v1h-25zM161 198h49v1h-49zM130 82h49v1h-49zM612 91h29v1h-29zM234 449h32v1h-32zM699 397h48v1h-48zM588 468h48v1h-48zM516 360h26v1h-26zM182 463h46v1h-46zM656 434h34v1h-34zM102 439h12v1h-12zM652 158h20v1h-20zM668 104h33v1h-33zM491 222h47v1h-47zM641 310h49v1h-49zM750 322h41v1h-41zM394 481h38v1h-38zM717 545h16v1h-16zM73 494h30v1h-30zM371 478h26v1h-26zM360 298h50v1h-50zM232 104h37v1h-37zM704 586h27v1h-27zM651 330h27v1h-27zM193 417h34v1h-34zM721 103h13v1h-13zM382 427h19v1h-19zM302 157h42v1h-42zM560 477h25v1h-25zM646 339h36v1h-36zM479 184h17v1h-17zM608 192h22v1h-22zM487 129h39v1h-39zM782 178h23v1h-23zM376 305h43v1h-43zM284 547h30v1h-30zM600 557h13v1h-13zM249 360h14v1h-14zM544 193h50v1h-50zM379 361h34v1h-34zM184 204h40v1h-40zM350 490h33v1h-33zM394 222h46v1h-46zM237 308h39v1h-39zM424 86h15v1h-15zM605 579h39v1h-39zM593 421h15v1h-15zM436 262h48v1h-48zM600 189h15v1h-15zM712 81h28v1h-28zM433 583h48v1h-48zM204 78h34v1h-34zM715 110h26v1h-26zM504 91h14v1h-14zM208 108h37v1h-37zM121 106h46v1h-46zM440 399h24v1h-24zM765 83h49v1h-49zM372 129h19v1h-19zM96 408h50v1h-50zM147 507h34v1h-34zM506 212h37v1h-37zM652 79h10v1h-10zM340 121h35v1h-35zM628 465h21v1h-21zM251 220h31v1h-31zM190 128h49v1h-49zM183 204h12v1h-12z"/><path fill="#fff" fill-opacity=".04" d="M527 233h19v1h-19zM708 85h43v1h-43zM725 228h41v1h-41zM595 225h11v1h-11zM480 133h28v1h-28zM771 78h23v1h-23zM346 520h47v1h-47zM572 228h43v1h-43zM345 288h38v1h-38zM787 237h12v1h-12zM563 112h29v1h-29zM147 309h44v1h-44zM709 309h30v1h-30zM726 147h35v1h-35zM203 308h39v1h-39zM544 245h23v1h-23zM619 578h30v1h-30zM633 293h27v1h-27zM293 492h14v1h-14zM656 332h22v1h-22zM100 551h26v1h-26zM315 145h15v1h-15zM594 483h10v1h-10zM142 486h31v1h-31zM651 326h39v1h-39zM156 249h15v1h-15zM758 147h41v1h-41zM350 574h13v1h-13zM332 174h22v1h-22zM676 438h15v1h-15zM230 583h17v1h-17zM407 124h33v1h-33zM408 346h43v1h-43zM778 377h24v1h-24zM615 401h25v1h-25zM205 405h15v1h-15zM520 547h43v1h-43zM708 152h13v1h-13zM568 182h44v1h-44zM449 254h49v1h-49zM95 460h50v1h-50zM788 514h45v1h-45zM386 331h33v1h-33zM465 555h18v1h-18zM569 299h17v1h-17zM654 504h13v1h-13zM629 233h23v1h-23zM685 355h46v1h-46zM310 330h47v1h-47zM160 482h33v1h-33zM216 341h35v1h-35zM641 131h39v1h-39zM493 499h10v1h-10zM463 261h37v1h-37zM228 525h27v1h-27zM243 122h43v1h-43zM557 576h10v1h-10zM196 235h30v1h-30zM483 158h31v1h-31zM97 221h44v1h-44zM506 258h45v1h-45zM772 473h16v1h-16zM292 345h41v1h-41zM117 122h46v1h-46zM654 320h35v1h-35zM281 169h11v1h-11zM396 524h24v1h-24zM684 351h34v1h-34zM125 317h28v1h-28zM496 381h21v1h-21zM466 444h21v1h-21zM264 326h12v1h-12zM198 393h48v1h-48zM185 107h11v1h-11zM257 387h13v1h-13zM413 439h19v1h-19zM760 293h24v1h-24zM85 305h24v1h-24zM274 174h34v1h-34zM380 100h38v1h-38zM418 302h24v1h-24zM618 347h20v1h-20zM112 415h25v1h-25zM145 569h39v1h-39zM653 280h30v1h-30zM682 339h37v1h-37zM130 580h38v1h-38zM706 277h28v1h-28zM690 503h40v1h-40zM532 151h35v1h-35zM550 182h23v1h-23zM164 491h35v1h-35zM548 217h22v1h-22zM369 141h46v1h-46zM768 220h22v1h-22zM607 430h43v1h-43zM434 267h38v1h-38zM434 583h17v1h-17zM556 268h33v1h-33zM81 430h47v1h-47zM711 168h26v1h-26zM105 134h15v1h-15zM513 549h38v1h-38zM561 118h32v1h-32zM640 571h29v1h-29zM318 160h20v1h-20zM570 116h37v1h-37zM426 243h25v1h-25zM308 171h36v1h-36zM98 430h12v1h-12zM571 328h37v1h-37zM575 173h20v1h-20zM298 468h38v1h-38zM459 363h23v1h-23zM416 126h49v1h-49zM576 376h29v1h-29zM71 387h22v1h-22zM138 506h25v1h-25zM101 206h40v1h-40zM296 378h50v1h-50zM695 243h33v1h-33zM658 165h47v1h-47zM764 148h24v1h-24zM653 148h29v1h-29zM619 183h31v1h-31zM149 189h44v1h-44zM299 469h10v1h-10zM105 502h13v1h-13zM106 314h20v1h-20zM379 405h27v1h-27zM204 498h38v1h-38zM339 468h14v1h-14zM368 294h34v1h-34zM226 390h33v1h-33zM398 230h31v1h-31zM760 161h12v1h-12zM331 336h24v1h-24zM268 163h22v1h-22zM704 446h19v1h-19zM508 241h24v1h-24zM778 320h32v1h-32zM369 88h37v1h-37zM294 316h50v1h-50zM285 528h23v1h-23zM350 492h40v1h-40zM761 550h46v1h-46zM571 203h26v1h-26zM365 519h36v1h-36zM132 540h15v1h-15zM384 183h37v1h-37zM788 78h13v1h-13zM735 387h50v1h-50zM195 141h22v1h-22zM146 217h28v1h-28zM222 164h24v1h-24zM511 148h39v1h-39zM358 305h26v1h-26zM139 503h35v1h-35zM776 398h14v1h-14zM698 356h13v1h-13zM589 181h39v1h-39zM296 372h23v1h-23zM348 408h35v1h-35zM775 192h44v1h-44zM747 227h37v1h-37zM239 143h32v1h-32zM262 358h48v1h-48zM229 175h27v1h-27zM528 176h42v1h-42zM452 461h19v1h-19zM417 116h32v1h-32zM590 151h10v1h-10zM379 528h19v1h-19zM143 106h44v1h-44zM525 255h34v1h-34zM96 572h20v1h-20zM443 276h41v1h-41zM769 521h39v1h-39zM142 507h45v1h-45zM439 189h31v1h-31zM474 502h29v1h-29zM532 299h40v1h-40zM536 491h39v1h-39zM185 259h40v1h-40zM357 159h24v1h-24zM287 361h18v1h-18zM675 214h46v1h-46zM419 284h32v1h-32zM712 336h17v1h-17zM365 203h22v1h-22zM217 238h22v1h-22zM276 370h48v1h-48zM278 570h34v1h-34zM729 269h11v1h-11zM607 478h46v1h-46zM535 161h29v1h-29zM260 471h31v1h-31zM536 155h37v1h-37zM319 451h31v1h-31zM247 552h14v1h-14zM109 527h16v1h-16zM195 528h50v1h-50zM767 296h22v1h-22z"/><path fill="#fff" fill-opacity=".05" d="M155 440h26v1h-26zM658 147h34v1h-34zM387 385h15v1h-15zM331 536h10v1h-10zM745 554h38v1h-38zM243 135h38v1h-38zM255 239h48v1h-48zM220 175h21v1h-21zM512 469h21v1h-21zM632 383h12v1h-12zM749 444h28v1h-28zM665 584h30v1h-30zM509 446h40v1h-40zM121 397h36v1h-36zM718 220h25v1h-25zM92 191h43v1h-43zM169 459h37v1h-37zM236 585h50v1h-50zM746 358h15v1h-15zM626 516h42v1h-42zM527 501h34v1h-34zM148 310h12v1h-12zM232 180h36v1h-36zM659 564h39v1h-39zM412 434h38v1h-38zM298 519h29v1h-29zM339 516h11v1h-11zM386 250h49v1h-49zM473 389h25v1h-25zM224 341h48v1h-48zM389 288h37v1h-37zM232 551h35v1h-35zM754 351h41v1h-41zM737 172h10v1h-10zM299 278h49v1h-49zM350 242h24v1h-24zM256 250h40v1h-40zM742 501h49v1h-49zM81 470h43v1h-43zM412 187h21v1h-21zM180 374h30v1h-30zM176 357h16v1h-16zM461 358h30v1h-30zM77 430h47v1h-47zM284 389h47v1h-47zM119 280h49v1h-49zM246 478h15v1h-15zM476 236h45v1h-45zM192 177h33v1h-33zM294 255h35v1h-35zM603 423h32v1h-32zM150 428h42v1h-42zM208 292h24v1h-24zM459 566h14v1h-14zM301 554h30v1h-30zM609 212h15v1h-15zM626 104h28v1h-28zM546 90h21v1h-21zM579 405h40v1h-40zM751 335h42v1h-42zM190 495h40v1h-40zM300 274h32v1h-32zM345 315h49v1h-49zM723 139h31v1h-31zM458 191h35v1h-35zM614 586h17v1h-17zM666 441h21v1h-21zM722 172h26v1h-26zM239 107h32v1h-32zM315 380h27v1h-27zM760 120h14v1h-14zM429 500h14v1h-14zM544 353h49v1h-49zM81 79h20v1h-20zM283 474h14v1h-14zM245 360h43v1h-43zM675 271h50v1h-50zM386 136h38v1h-38zM574 358h34v1h-34zM731 139h33v1h-33zM163 543h10v1h-10zM245 514h31v1h-31zM104 304h40v1h-40zM389 412h11v1h-11zM724 147h19v1h-19zM388 457h34v1h-34zM755 89h26v1h-26zM427 121h35v1h-35zM319 437h18v1h-18zM93 180h32v1h-32zM675 112h26v1h-26zM317 112h16v1h-16zM552 169h49v1h-49zM239 91h19v1h-19zM160 411h38v1h-38zM233 304h24v1h-24zM177 509h39v1h-39zM494 551h37v1h-37zM129 124h49v1h-49zM432 81h40v1h-40zM490 314h44v1h-44zM367 485h32v1h-32zM759 126h41v1h-41zM343 385h19v1h-19zM738 540h31v1h-31zM157 460h48v1h-48zM714 97h34v1h-34zM469 462h40v1h-40zM267 388h37v1h-37zM396 261h10v1h-10zM705 303h22v1h-22zM562 508h48v1h-48zM256 570h49v1h-49zM616 265h43v1h-43zM721 331h10v1h-10zM370 335h29v1h-29zM628 174h39v1h-39zM647 229h44v1h-44zM772 549h10v1h-10zM185 231h38v1h-38zM725 233h23v1h-23zM264 173h32v1h-32zM131 426h34v1h-34zM728 457h49v1h-49zM137 106h44v1h-44zM217 456h17v1h-17zM671 146h34v1h-34zM360 139h31v1h-31zM399 154h16v1h-16zM167 429h13v1h-13zM352 556h13v1h-13zM784 227h39v1h-39zM509 385h26v1h-26zM417 326h13v1h-13zM203 196h49v1h-49zM138 121h19v1h-19zM438 208h40v1h-40zM608 511h26v1h-26zM777 183h21v1h-21zM285 553h23v1h-23zM518 573h29v1h-29zM250 198h49v1h-49zM114 519h48v1h-48zM446 197h48v1h-48zM631 272h21v1h-21zM408 316h24v1h-24zM444 522h32v1h-32zM570 360h20v1h-20zM339 488h29v1h-29zM277 257h40v1h-40zM382 410h11v1h-11zM790 490h12v1h-12zM478 415h32v1h-32zM729 247h40v1h-40zM649 310h31v1h-31zM674 216h45v1h-45zM425 289h25v1h-25zM548 529h21v1h-21zM213 178h41v1h-41zM547 251h48v1h-48zM251 354h39v1h-39zM626 403h26v1h-26zM295 415h26v1h-26zM483 495h22v1h-22zM157 99h40v1h-40zM775 118h41v1h-41zM325 186h23v1h-23zM333 141h10v1h-10zM772 86h45v1h-45zM167 455h35v1h-35zM600 238h23v1h-23zM306 578h12v1h-12zM439 428h42v1h-42zM666 88h38v1h-38zM698 212h21v1h-21zM213 330h21v1h-21zM604 438h39v1h-39zM572 138h33v1h-33zM644 380h15v1h-15zM474 262h46v1h-46zM376 442h27v1h-27zM414 472h22v1h-22zM386 566h16v1h-16zM735 263h41v1h-41zM266 332h19v1h-19zM426 444h38v1h-38zM138 259h24v1h-24zM680 476h13v1h-13zM145 320h30v1h-30zM126 465h41v1h-41zM110 559h13v1h-13zM696 232h35v1h-35zM205 475h42v1h-42zM299 331h33v1h-33zM583 583h50v1h-50zM400 515h11v1h-11zM84 216h19v1h-19zM465 501h23v1h-23zM223 251h32v1h-32zM279 152h13v1h-13zM438 251h41v1h-41z"/><path fill="#fff" fill-opacity=".06" d="M714 179h27v1h-27zM113 584h19v1h-19zM79 473h49v1h-49zM674 95h11v1h-11zM394 185h18v1h-18zM354 524h48v1h-48zM426 336h15v1h-15zM106 177h19v1h-19zM696 378h18v1h-18zM255 286h39v1h-39zM733 270h10v1h-10zM478 384h29v1h-29zM123 260h43v1h-43zM523 149h36v1h-36zM708 507h23v1h-23zM359 529h19v1h-19zM652 382h27v1h-27zM702 546h12v1h-12zM398 182h34v1h-34zM107 238h16v1h-16zM679 338h24v1h-24zM178 363h34v1h-34zM320 322h46v1h-46zM626 357h45v1h-45zM530 495h43v1h-43zM372 517h13v1h-13zM77 385h47v1h-47zM503 489h46v1h-46zM535 109h30v1h-30zM460 271h13v1h-13zM118 431h27v1h-27zM705 87h43v1h-43zM345 130h33v1h-33zM599 521h32v1h-32zM502 489h19v1h-19zM94 96h32v1h-32zM223 387h22v1h-22zM647 228h33v1h-33zM329 444h50v1h-50zM245 269h14v1h-14zM547 83h23v1h-23zM94 82h46v1h-46zM443 398h50v1h-50zM84 521h37v1h-37zM225 493h33v1h-33zM271 364h37v1h-37zM780 375h39v1h-39zM219 114h50v1h-50zM85 288h33v1h-33zM754 402h19v1h-19zM600 584h47v1h-47zM513 317h19v1h-19zM728 468h12v1h-12zM761 128h33v1h-33zM411 328h19v1h-19zM775 244h33v1h-33zM692 517h26v1h-26zM147 217h11v1h-11zM609 425h21v1h-21zM100 363h45v1h-45zM474 504h24v1h-24zM338 102h47v1h-47zM494 167h22v1h-22zM388 196h14v1h-14zM645 267h40v1h-40zM509 354h47v1h-47zM717 369h39v1h-39zM571 517h40v1h-40zM547 217h21v1h-21zM545 474h13v1h-13zM405 281h14v1h-14zM393 186h49v1h-49zM682 413h39v1h-39zM766 356h47v1h-47zM497 88h49v1h-49zM434 205h33v1h-33zM376 211h10v1h-10zM659 350h24v1h-24zM218 122h12v1h-12zM671 514h35v1h-35zM750 145h20v1h-20zM180 543h12v1h-12zM283 243h48v1h-48zM528 419h11v1h-11zM588 433h48v1h-48zM344 240h45v1h-45zM448 128h12v1h-12zM770 208h45v1h-45zM614 256h18v1h-18zM286 83h38v1h-38zM563 385h42v1h-42zM130 353h18v1h-18zM305 468h19v1h-19zM578 511h41v1h-41zM196 409h26v1h-26zM364 275h12v1h-12zM723 349h50v1h-50zM534 317h48v1h-48zM105 342h36v1h-36zM426 301h39v1h-39zM227 101h43v1h-43zM429 93h15v1h-15zM460 250h21v1h-21zM592 95h13v1h-13zM164 216h49v1h-49zM354 575h47v1h-47zM384 392h21v1h-21zM527 331h11v1h-11zM447 513h23v1h-23zM375 106h18v1h-18zM74 202h18v1h-18zM210 223h18v1h-18zM728 541h48v1h-48zM244 368h43v1h-43zM330 300h37v1h-37zM644 207h28v1h-28zM602 297h33v1h-33zM89 413h19v1h-19zM604 227h45v1h-45zM447 271h25v1h-25zM242 381h39v1h-39zM707 103h50v1h-50zM588 430h43v1h-43zM560 243h28v1h-28zM246 313h23v1h-23zM613 490h44v1h-44zM400 230h46v1h-46zM669 119h35v1h-35zM84 453h42v1h-42zM503 274h37v1h-37zM274 333h39v1h-39zM247 494h36v1h-36zM133 334h46v1h-46zM248 577h43v1h-43zM162 109h30v1h-30zM643 568h24v1h-24zM739 514h35v1h-35zM285 207h16v1h-16zM148 86h13v1h-13zM257 297h30v1h-30zM491 241h13v1h-13zM473 391h25v1h-25zM508 496h40v1h-40zM415 459h36v1h-36zM777 462h43v1h-43zM126 441h24v1h-24zM565 353h49v1h-49zM512 125h16v1h-16zM640 507h40v1h-40zM239 335h28v1h-28zM252 473h41v1h-41zM356 291h16v1h-16zM328 153h27v1h-27zM785 144h49v1h-49zM584 575h23v1h-23zM468 267h24v1h-24zM186 560h39v1h-39zM316 267h14v1h-14zM288 353h47v1h-47zM188 519h46v1h-46zM452 197h37v1h-37zM503 343h34v1h-34zM227 461h50v1h-50zM740 282h25v1h-25zM256 511h43v1h-43zM241 259h36v1h-36zM306 481h44v1h-44zM188 497h28v1h-28zM136 263h26v1h-26zM96 334h15v1h-15zM209 335h23v1h-23zM468 479h29v1h-29zM466 113h17v1h-17zM271 201h22v1h-22zM616 217h32v1h-32zM348 412h24v1h-24zM563 95h46v1h-46zM226 78h24v1h-24zM629 179h37v1h-37zM268 431h28v1h-28zM132 114h41v1h-41zM779 190h23v1h-23zM633 574h39v1h-39zM103 271h48v1h-48zM354 517h19v1h-19zM153 500h25v1h-25zM135 283h22v1h-22zM286 523h28v1h-28zM769 145h43v1h-43zM112 477h32v1h-32zM576 147h37v1h-37zM350 423h18v1h-18zM408 257h17v1h-17zM108 325h10v1h-10zM338 199h18v1h-18zM342 410h38v1h-38zM286 403h29v1h-29zM665 559h11v1h-11zM553 393h46v1h-46zM414 233h20v1h-20zM439 126h40v1h-40zM526 435h29v1h-29zM174 462h36v1h-36zM712 452h27v1h-27zM130 116h15v1h-15zM782 490h23v1h-23zM714 177h23v1h-23zM189 325h21v1h-21zM165 395h16v1h-16zM580 144h37v1h-37zM239 79h31v1h-31zM614 540h36v1h-36zM191 363h42v1h-42zM304 131h34v1h-34zM404 416h42v1h-42zM396 433h35v1h-35zM640 251h13v1h-13zM677 447h43v1h-43zM445 340h28v1h-28zM602 328h24v1h-24zM152 424h36v1h-36z"/><path fill="#fff" fill-opacity=".07" d="M207 204h16v1h-16zM265 582h18v1h-18zM790 144h31v1h-31zM408 276h47v1h-47zM404 285h26v1h-26zM149 428h22v1h-22zM472 512h24v1h-24zM605 341h45v1h-45zM539 289h35v1h-35zM574 143h31v1h-31zM399 448h32v1h-32zM149 469h16v1h-16zM307 217h29v1h-29zM669 99h50v1h-50zM713 109h10v1h-10zM560 259h23v1h-23zM445 542h17v1h-17zM570 469h43v1h-43zM133 463h39v1h-39zM283 97h44v1h-44zM231 562h29v1h-29zM438 116h18v1h-18zM254 176h35v1h-35zM408 174h31v1h-31zM677 527h14v1h-14zM376 90h30v1h-30zM535 538h30v1h-30zM706 314h47v1h-47zM678 477h20v1h-20zM163 279h45v1h-45zM90 242h34v1h-34zM599 439h45v1h-45zM617 442h38v1h-38zM310 479h50v1h-50zM192 278h41v1h-41zM124 254h26v1h-26zM344 430h27v1h-27zM346 367h46v1h-46zM229 151h33v1h-33zM607 584h10v1h-10zM186 140h39v1h-39zM729 200h14v1h-14zM572 526h25v1h-25zM365 138h36v1h-36zM101 512h49v1h-49zM196 560h16v1h-16zM301 556h40v1h-40zM371 258h25v1h-25zM334 190h33v1h-33zM512 554h34v1h-34zM221 324h35v1h-35zM309 401h26v1h-26zM363 207h45v1h-45zM737 481h44v1h-44zM132 563h14v1h-14zM497 149h41v1h-41zM216 112h23v1h-23zM570 316h12v1h-12zM356 487h13v1h-13zM365 180h47v1h-47zM194 297h37v1h-37zM282 265h37v1h-37zM706 473h15v1h-15zM710 528h45v1h-45zM646 442h35v1h-35zM778 445h42v1h-42zM397 330h10v1h-10zM203 175h34v1h-34zM699 97h11v1h-11zM363 170h22v1h-22zM587 293h27v1h-27zM650 423h19v1h-19zM551 331h29v1h-29zM538 394h21v1h-21zM591 126h24v1h-24zM403 332h22v1h-22zM741 127h42v1h-42zM543 99h26v1h-26zM671 426h30v1h-30zM648 353h28v1h-28zM375 158h17v1h-17zM679 88h11v1h-11zM238 537h46v1h-46zM185 454h50v1h-50zM256 248h34v1h-34zM612 194h25v1h-25zM130 100h35v1h-35zM484 314h23v1h-23zM684 585h23v1h-23zM696 214h44v1h-44zM650 133h49v1h-49zM668 78h18v1h-18zM110 410h43v1h-43zM154 521h32v1h-32zM520 499h17v1h-17zM394 254h22v1h-22zM554 302h18v1h-18zM458 387h46v1h-46zM370 88h46v1h-46zM552 391h19v1h-19zM601 251h49v1h-49zM790 103h37v1h-37zM733 199h41v1h-41zM692 518h49v1h-49zM404 84h13v1h-13zM525 445h44v1h-44zM574 581h35v1h-35zM539 452h47v1h-47zM577 417h20v1h-20zM211 241h39v1h-39zM682 360h27v1h-27zM498 154h26v1h-26zM97 405h43v1h-43zM161 452h17v1h-17zM77 228h46v1h-46zM603 462h28v1h-28zM318 457h49v1h-49zM459 280h38v1h-38zM584 317h10v1h-10zM608 466h24v1h-24zM201 192h45v1h-45zM398 585h13v1h-13zM479 226h50v1h-50zM636 560h24v1h-24zM156 208h13v1h-13zM529 390h40v1h-40zM704 487h35v1h-35zM587 399h42v1h-42zM368 144h49v1h-49zM112 186h11v1h-11zM527 448h26v1h-26zM203 325h32v1h-32zM656 302h15v1h-15zM268 149h36v1h-36zM172 162h33v1h-33zM188 311h17v1h-17zM521 370h12v1h-12zM736 523h28v1h-28zM632 297h15v1h-15zM234 89h32v1h-32zM315 436h46v1h-46zM503 421h39v1h-39zM537 120h41v1h-41zM185 381h39v1h-39zM629 336h46v1h-46zM748 549h24v1h-24zM382 533h26v1h-26zM619 567h42v1h-42zM702 226h45v1h-45zM719 360h33v1h-33zM731 560h17v1h-17zM453 378h38v1h-38zM316 475h44v1h-44zM743 456h27v1h-27zM720 366h12v1h-12zM603 570h37v1h-37zM568 312h11v1h-11zM561 388h43v1h-43zM600 470h14v1h-14zM587 482h22v1h-22zM390 417h20v1h-20zM686 187h36v1h-36zM300 412h34v1h-34zM489 463h47v1h-47zM455 174h12v1h-12zM192 532h26v1h-26zM381 229h19v1h-19zM460 251h45v1h-45zM223 203h40v1h-40zM103 388h26v1h-26zM179 464h14v1h-14zM724 476h11v1h-11zM164 252h45v1h-45zM377 292h20v1h-20zM707 438h19v1h-19zM270 455h19v1h-19zM423 435h23v1h-23zM140 456h15v1h-15zM577 331h28v1h-28zM377 228h42v1h-42zM779 515h35v1h-35zM757 541h10v1h-10zM646 100h33v1h-33zM638 198h30v1h-30zM668 103h45v1h-45zM459 276h11v1h-11zM675 563h34v1h-34zM105 318h50v1h-50zM722 568h48v1h-48zM223 386h11v1h-11zM244 337h27v1h-27zM504 465h25v1h-25zM438 490h41v1h-41zM72 126h35v1h-35zM459 232h35v1h-35zM644 484h45v1h-45zM387 339h11v1h-11zM505 585h46v1h-46zM625 508h14v1h-14zM395 466h42v1h-42zM133 459h11v1h-11zM155 271h11v1h-11zM437 461h28v1h-28zM552 470h32v1h-32zM89 405h44v1h-44zM491 396h23v1h-23zM446 398h10v1h-10zM596 125h45v1h-45zM548 361h44v1h-44zM233 428h18v1h-18zM322 79h27v1h-27zM406 335h29v1h-29zM282 104h14v1h-14zM587 359h18v1h-18zM195 332h40v1h-40zM307 339h37v1h-37zM676 380h45v1h-45zM632 195h31v1h-31zM516 165h14v1h-14zM355 348h25v1h-25zM552 490h19v1h-19zM591 424h33v1h-33zM443 148h11v1h-11zM226 404h46v1h-46zM320 465h25v1h-25zM739 343h30v1h-30zM506 563h24v1h-24zM209 490h49v1h-49zM630 263h42v1h-42zM146 322h48v1h-48zM590 311h50v1h-50zM199 586h42v1h-42zM649 302h24v1h-24zM461 566h48v1h-48zM612 537h23v1h-23zM630 285h26v1h-26zM521 448h29v1h-29zM144 215h36v1h-36zM245 312h24v1h-24zM773 160h37v1h-37zM779 416h46v1h-46zM318 93h24v1h-24zM300 452h17v1h-17zM167 463h22v1h-22zM314 85h34v1h-34zM377 109h29v1h-29zM760 97h24v1h-24zM651 228h41v1h-41z"/></svg>
<div style="position:absolute;left:0px;top:0px;width:800px;height:25px;background:#fff;"></div>
<div style="position:absolute;left:8px;top:6px;width:11px;height:11px;background:#560808;"></div>
<svg style="position:absolute;left:8px;top:6px" width="11" height="11" viewBox="0 0 11 11"><g fill="#fff"><circle cx="6.8" cy="2.9" r="1.6"/><circle cx="3.1" cy="6.3" r="1.7"/><circle cx="8.1" cy="7.6" r="1.6"/><path d="M6.8 1.5 L1.6 6.3 L8.3 9.1 Z"/></g><circle cx="5.9" cy="5.7" r="1.05" fill="#000"/></svg>
<div class="T" style="left:25px;top:13.0px"><span style="font:normal 10.67px/12.27px 'Liberation Sans',sans-serif;color:#1a1a1a;transform:translateY(-50%) scaleX(0.9);transform-origin:0 50%;-webkit-text-stroke:0.15px">GWizard: Machinist's Calculator</span></div>
<div style="position:absolute;left:703px;top:12px;width:9px;height:1px;background:#333;"></div>
<div style="position:absolute;left:739px;top:8px;width:7px;height:7px;border:1px solid #333;"></div>
<svg style="position:absolute;left:776px;top:8px" width="10" height="9" viewBox="0 0 10 9"><path d="M0.5 0.5 L9 8.5 M9 0.5 L0.5 8.5" stroke="#333" stroke-width="1.1"/></svg>
<div style="position:absolute;left:0px;top:25px;width:800px;height:32px;background:#000;"></div>
<div class="T" style="left:9px;top:41.2px"><span style="font:bold 10.67px/12.27px 'Liberation Sans',sans-serif;color:#f6f2e4;transform:translateY(-50%) scaleX(0.86);transform-origin:0 50%;">Howdy, bob!</span></div>
<div class="bt" style="left:70px;top:34px;width:53px;height:13px;background:linear-gradient(#f6f6f6,#d8d8d8 55%,#c2c2c2);border-color:#a0a0a0;"></div>
<div class="T" style="left:-202.5px;width:600px;text-align:center;top:42.7px"><span style="font:normal 11.43px/13.15px 'Liberation Sans',sans-serif;color:#222;transform:translateY(-50%) scaleX(0.92);transform-origin:50% 50%;">Login</span></div>
<div class="bt" style="left:500px;top:34px;width:80px;height:14px;background:linear-gradient(#70e88c,#4cd06a 50%,#3fc25d);border-color:#3aa654;"></div>
<div class="T" style="left:241.0px;width:600px;text-align:center;top:42.5px"><span style="font:normal 10.16px/11.69px 'Liberation Sans',sans-serif;color:#15301c;transform:translateY(-50%) scaleX(0.98);transform-origin:50% 50%;">Getting Started</span></div>
<div class="T" style="left:590px;top:41px"><span style="font:bold 10.16px/11.69px 'Liberation Sans',sans-serif;color:#e6e6e6;transform:translateY(-50%) scaleX(0.98);transform-origin:0 50%;">v3.80 is current</span></div>
<svg style="position:absolute;left:729px;top:31px" width="20" height="20" viewBox="0 0 20 20"><circle cx="10.2" cy="10.2" r="5.9" fill="#050a05" stroke="#5cd85c" stroke-width="2"/><path d="M8.2 6.6 H12.2 V9 Q12.6 10.5 11.6 11.6 L11.6 13 H8.8 L8.8 11.6 Q7.8 10.5 8.2 9 Z" fill="#4cc24c"/><circle cx="10.2" cy="13.6" r="1.2" fill="#050a05"/><circle cx="8.4" cy="10" r="0.8" fill="#050a05"/><circle cx="12" cy="10" r="0.8" fill="#050a05"/></svg>
<svg style="position:absolute;left:752px;top:32px" width="20" height="20" viewBox="0 0 20 20"><circle cx="9.5" cy="9.8" r="7.4" fill="#060606" stroke="#5c5048" stroke-width="1.3"/><path d="M3.6 6 A7.4 7.4 0 0 1 8 2.5" stroke="#bdbdbd" stroke-width="1.3" fill="none"/><text x="9.8" y="13.2" font-family="Liberation Sans" font-size="8.6" font-weight="bold" fill="#72acdf" text-anchor="middle">tip</text></svg>
<svg style="position:absolute;left:775px;top:31px" width="20" height="20" viewBox="0 0 20 20"><circle cx="9.6" cy="10" r="6.6" fill="#88d8cc"/><text x="9.8" y="14.2" font-family="Liberation Sans" font-size="11.5" font-weight="bold" fill="#000" stroke="#000" stroke-width="0.5" text-anchor="middle">?</text></svg>
<div style="position:absolute;left:1px;top:57px;width:99px;height:19px;background:linear-gradient(#8cdcff,#7ccaf4 45%,#6cb6e6);"></div>
<div class="T" style="left:-250px;width:600px;text-align:center;top:68.0px"><span style="font:normal 12.37px/14.22px 'Liberation Sans',sans-serif;color:#0c1c30;transform:translateY(-50%) scaleX(0.94);transform-origin:50% 50%;">Calculator</span></div>
<div style="position:absolute;left:101px;top:57px;width:99px;height:19px;background:linear-gradient(#8cdcff,#7ccaf4 45%,#6cb6e6);"></div>
<div class="T" style="left:-150px;width:600px;text-align:center;top:68.0px"><span style="font:normal 12.37px/14.22px 'Liberation Sans',sans-serif;color:#0c1c30;transform:translateY(-50%) scaleX(0.94);transform-origin:50% 50%;">ToDo</span></div>
<div style="position:absolute;left:201px;top:57px;width:99px;height:19px;background:linear-gradient(#8cdcff,#7ccaf4 45%,#6cb6e6);"></div>
<div class="T" style="left:-50px;width:600px;text-align:center;top:68.0px"><span style="font:normal 12.37px/14.22px 'Liberation Sans',sans-serif;color:#0c1c30;transform:translateY(-50%) scaleX(0.94);transform-origin:50% 50%;">CADCAM</span></div>
<div style="position:absolute;left:301px;top:57px;width:99px;height:19px;background:linear-gradient(#34465a,#1a2230 45%,#10151e);"></div>
<div class="T" style="left:50px;width:600px;text-align:center;top:68.0px"><span style="font:normal 12.37px/14.22px 'Liberation Sans',sans-serif;color:#f0d4a0;transform:translateY(-50%) scaleX(0.94);transform-origin:50% 50%;">Feeds/Speeds</span></div>
<div style="position:absolute;left:401px;top:57px;width:99px;height:19px;background:linear-gradient(#8cdcff,#7ccaf4 45%,#6cb6e6);"></div>
<div class="T" style="left:150px;width:600px;text-align:center;top:68.0px"><span style="font:normal 12.37px/14.22px 'Liberation Sans',sans-serif;color:#0c1c30;transform:translateY(-50%) scaleX(0.94);transform-origin:50% 50%;">Geometry</span></div>
<div style="position:absolute;left:501px;top:57px;width:99px;height:19px;background:linear-gradient(#8cdcff,#7ccaf4 45%,#6cb6e6);"></div>
<div class="T" style="left:250px;width:600px;text-align:center;top:68.0px"><span style="font:normal 12.37px/14.22px 'Liberation Sans',sans-serif;color:#0c1c30;transform:translateY(-50%) scaleX(0.94);transform-origin:50% 50%;">Threads</span></div>
<div style="position:absolute;left:601px;top:57px;width:99px;height:19px;background:linear-gradient(#8cdcff,#7ccaf4 45%,#6cb6e6);"></div>
<div class="T" style="left:350px;width:600px;text-align:center;top:68.0px"><span style="font:normal 12.37px/14.22px 'Liberation Sans',sans-serif;color:#0c1c30;transform:translateY(-50%) scaleX(0.94);transform-origin:50% 50%;">Quick Refs</span></div>
<div style="position:absolute;left:701px;top:57px;width:99px;height:19px;background:linear-gradient(#8cdcff,#7ccaf4 45%,#6cb6e6);"></div>
<div class="T" style="left:450px;width:600px;text-align:center;top:68.0px"><span style="font:normal 12.37px/14.22px 'Liberation Sans',sans-serif;color:#0c1c30;transform:translateY(-50%) scaleX(0.94);transform-origin:50% 50%;">Setup</span></div>
<div style="position:absolute;left:98px;top:57px;width:1px;height:19px;background:#8adcff;"></div>
<div style="position:absolute;left:99px;top:57px;width:2px;height:19px;background:#3a3e46;"></div>
<div style="position:absolute;left:101px;top:57px;width:1px;height:19px;background:#8adcff;"></div>
<div style="position:absolute;left:198px;top:57px;width:1px;height:19px;background:#8adcff;"></div>
<div style="position:absolute;left:199px;top:57px;width:2px;height:19px;background:#3a3e46;"></div>
<div style="position:absolute;left:201px;top:57px;width:1px;height:19px;background:#8adcff;"></div>
<div style="position:absolute;left:298px;top:57px;width:1px;height:19px;background:#8adcff;"></div>
<div style="position:absolute;left:299px;top:57px;width:2px;height:19px;background:#3a3e46;"></div>
<div style="position:absolute;left:399px;top:57px;width:2px;height:19px;background:#3a3e46;"></div>
<div style="position:absolute;left:401px;top:57px;width:1px;height:19px;background:#8adcff;"></div>
<div style="position:absolute;left:498px;top:57px;width:1px;height:19px;background:#8adcff;"></div>
<div style="position:absolute;left:499px;top:57px;width:2px;height:19px;background:#3a3e46;"></div>
<div style="position:absolute;left:501px;top:57px;width:1px;height:19px;background:#8adcff;"></div>
<div style="position:absolute;left:598px;top:57px;width:1px;height:19px;background:#8adcff;"></div>
<div style="position:absolute;left:599px;top:57px;width:2px;height:19px;background:#3a3e46;"></div>
<div style="position:absolute;left:601px;top:57px;width:1px;height:19px;background:#8adcff;"></div>
<div style="position:absolute;left:698px;top:57px;width:1px;height:19px;background:#8adcff;"></div>
<div style="position:absolute;left:699px;top:57px;width:2px;height:19px;background:#3a3e46;"></div>
<div style="position:absolute;left:701px;top:57px;width:1px;height:19px;background:#8adcff;"></div>
<div style="position:absolute;left:0px;top:57px;width:800px;height:1px;background:#90e0ff;"></div>
<div style="position:absolute;left:300px;top:57px;width:100px;height:1px;background:#7c848e;"></div>
<div style="position:absolute;left:0px;top:76px;width:800px;height:1px;background:#1e3446;"></div>
<div style="position:absolute;left:0px;top:77px;width:800px;height:1px;background:#2f6c94;"></div>
<div style="position:absolute;left:0px;top:78px;width:75px;height:509px;background:#03182a;"></div>
<div style="position:absolute;left:75px;top:78px;width:1px;height:509px;background:#2f86c8;"></div>
<div style="position:absolute;left:76px;top:78px;width:723px;height:1px;background:#d6d4d8;"></div>
<svg style="position:absolute;left:0;top:0" width="800" height="608"><rect x="76" y="133.1" width="723" height="1" fill="#e4dcd4" fill-opacity="0.45"/><rect x="76" y="135.9" width="723" height="1" fill="#e4dcd4" fill-opacity="0.45"/><rect x="0" y="134.1" width="799" height="1.8" fill="#4189c0"/><rect x="76" y="168.8" width="723" height="1" fill="#e4dcd4" fill-opacity="0.45"/><rect x="76" y="171.20000000000002" width="723" height="1" fill="#e4dcd4" fill-opacity="0.45"/><rect x="0" y="169.8" width="799" height="1.4" fill="#4189c0"/><rect x="76" y="204" width="723" height="1" fill="#e4dcd4" fill-opacity="0.45"/><rect x="76" y="207" width="723" height="1" fill="#e4dcd4" fill-opacity="0.45"/><rect x="0" y="205" width="799" height="2" fill="#4189c0"/><rect x="76" y="238.8" width="723" height="1" fill="#e4dcd4" fill-opacity="0.45"/><rect x="76" y="241.20000000000002" width="723" height="1" fill="#e4dcd4" fill-opacity="0.45"/><rect x="0" y="239.8" width="799" height="1.4" fill="#4189c0"/><rect x="76" y="273.9" width="723" height="1" fill="#e4dcd4" fill-opacity="0.45"/><rect x="76" y="276.9" width="723" height="1" fill="#e4dcd4" fill-opacity="0.45"/><rect x="0" y="274.9" width="799" height="2" fill="#4189c0"/><rect x="76" y="380" width="723" height="1" fill="#e4dcd4" fill-opacity="0.45"/><rect x="76" y="383" width="723" height="1" fill="#e4dcd4" fill-opacity="0.45"/><rect x="0" y="381" width="799" height="2" fill="#4189c0"/><rect x="76" y="435.1" width="723" height="1" fill="#e4dcd4" fill-opacity="0.45"/><rect x="76" y="438.1" width="723" height="1" fill="#e4dcd4" fill-opacity="0.45"/><rect x="0" y="436.1" width="799" height="2" fill="#4189c0"/><rect x="76" y="507.8" width="723" height="1" fill="#e4dcd4" fill-opacity="0.45"/><rect x="76" y="510.2" width="723" height="1" fill="#e4dcd4" fill-opacity="0.45"/><rect x="0" y="508.8" width="799" height="1.4" fill="#4189c0"/><rect x="76" y="544.9" width="723" height="1" fill="#e4dcd4" fill-opacity="0.45"/><rect x="76" y="547.8" width="723" height="1" fill="#e4dcd4" fill-opacity="0.45"/><rect x="0" y="545.9" width="799" height="1.9" fill="#4189c0"/><rect x="76.5" y="77" width="1" height="510" fill="#e8dcd0" fill-opacity="0.4"/></svg>
<div class="T" style="left:10px;top:91.2px"><span style="font:bold 11.52px/13.25px 'Liberation Sans',sans-serif;color:#b0d2ee;transform:translateY(-50%) scaleX(0.99);transform-origin:0 50%;-webkit-text-stroke:0;letter-spacing:0.35px">Machine</span></div>
<div class="T" style="left:10px;top:149.2px"><span style="font:bold 11.52px/13.25px 'Liberation Sans',sans-serif;color:#b0d2ee;transform:translateY(-50%) scaleX(0.99);transform-origin:0 50%;-webkit-text-stroke:0;letter-spacing:0.35px">Tool</span></div>
<div class="T" style="left:10px;top:184.7px"><span style="font:bold 11.52px/13.25px 'Liberation Sans',sans-serif;color:#b0d2ee;transform:translateY(-50%) scaleX(0.99);transform-origin:0 50%;-webkit-text-stroke:0;letter-spacing:0.35px">Mfg</span></div>
<div class="T" style="left:10px;top:220.2px"><span style="font:bold 11.52px/13.25px 'Liberation Sans',sans-serif;color:#b0d2ee;transform:translateY(-50%) scaleX(0.99);transform-origin:0 50%;-webkit-text-stroke:0;letter-spacing:0.35px">Mini</span></div>
<div class="T" style="left:10px;top:234.2px"><span style="font:bold 11.52px/13.25px 'Liberation Sans',sans-serif;color:#b0d2ee;transform:translateY(-50%) scaleX(0.99);transform-origin:0 50%;-webkit-text-stroke:0;letter-spacing:0.35px">Calcs</span></div>
<div class="T" style="left:10px;top:253.7px"><span style="font:bold 11.52px/13.25px 'Liberation Sans',sans-serif;color:#b0d2ee;transform:translateY(-50%) scaleX(0.99);transform-origin:0 50%;-webkit-text-stroke:0;letter-spacing:0.35px">Cut</span></div>
<div class="T" style="left:10px;top:289.2px"><span style="font:bold 11.52px/13.25px 'Liberation Sans',sans-serif;color:#b0d2ee;transform:translateY(-50%) scaleX(0.99);transform-origin:0 50%;-webkit-text-stroke:0;letter-spacing:0.35px">Limits</span></div>
<div class="T" style="left:10px;top:395.7px"><span style="font:bold 11.52px/13.25px 'Liberation Sans',sans-serif;color:#b0d2ee;transform:translateY(-50%) scaleX(0.99);transform-origin:0 50%;-webkit-text-stroke:0;letter-spacing:0.35px">HSM</span></div>
<div class="T" style="left:10px;top:451.2px"><span style="font:bold 11.52px/13.25px 'Liberation Sans',sans-serif;color:#b0d2ee;transform:translateY(-50%) scaleX(0.99);transform-origin:0 50%;-webkit-text-stroke:0;letter-spacing:0.35px">Tips</span></div>
<div class="T" style="left:10px;top:522.7px"><span style="font:bold 11.52px/13.25px 'Liberation Sans',sans-serif;color:#b0d2ee;transform:translateY(-50%) scaleX(0.99);transform-origin:0 50%;-webkit-text-stroke:0;letter-spacing:0.35px">Results</span></div>
<div class="T" style="left:10px;top:560.2px"><span style="font:bold 11.52px/13.25px 'Liberation Sans',sans-serif;color:#b0d2ee;transform:translateY(-50%) scaleX(0.99);transform-origin:0 50%;-webkit-text-stroke:0;letter-spacing:0.35px">Cut KB</span></div>
<div class="cb" style="left:82px;top:86px;width:202px;height:15px;"><div class="cbb" style="width:14px;height:15px"><div class="tri"></div></div></div>
<div class="T" style="left:88px;top:95.3px"><span style="font:normal 10.16px/11.69px 'Liberation Sans',sans-serif;color:#0a0a0a;transform:translateY(-50%) scaleX(0.98);transform-origin:0 50%;">Haas VF-1</span></div>
<div class="T" style="left:83px;top:111.5px"><span style="font:normal 10.16px/11.69px 'Liberation Sans',sans-serif;color:#141414;transform:translateY(-50%) scaleX(0.98);transform-origin:0 50%;">SFM 100%&nbsp; IPT 100%</span></div>
<div class="T" style="left:290px;top:95px"><span style="font:normal 10.16px/11.69px 'Liberation Sans',sans-serif;color:#141414;transform:translateY(-50%) scaleX(0.98);transform-origin:0 50%;">Material</span></div>
<div class="cb" style="left:331px;top:86px;width:188px;height:15px;"><div class="cbb" style="width:14px;height:15px"><div class="tri"></div></div></div>
<div class="T" style="left:337px;top:95.3px"><span style="font:normal 10.16px/11.69px 'Liberation Sans',sans-serif;color:#0a0a0a;transform:translateY(-50%) scaleX(0.98);transform-origin:0 50%;">Aluminum - Wrought (6061)</span></div>
<div class="T" style="left:290px;top:111.5px"><span style="font:normal 10.16px/11.69px 'Liberation Sans',sans-serif;color:#141414;transform:translateY(-50%) scaleX(0.98);transform-origin:0 50%;">Hardness: 20-150 BHN</span></div>
<div class="bt" style="left:526px;top:86px;width:55px;height:15px;"></div>
<div class="T" style="left:254.5px;width:600px;text-align:center;top:95.0px"><span style="font:normal 10.16px/11.69px 'Liberation Sans',sans-serif;color:#1a1a1a;transform:translateY(-50%) scaleX(0.98);transform-origin:50% 50%;">More</span></div>
<div class="T" style="left:588px;top:95px"><span style="font:normal 10.16px/11.69px 'Liberation Sans',sans-serif;color:#141414;transform:translateY(-50%) scaleX(0.98);transform-origin:0 50%;">Tool</span></div>
<div class="cb" style="left:611px;top:86px;width:154px;height:16px;background:#fff;"><div class="cbb" style="width:14px;height:16px"><div class="tri"></div></div></div>
<div class="T" style="left:615px;top:95.8px"><span style="font:normal 10.16px/11.69px 'Liberation Sans',sans-serif;color:#0a0a0a;transform:translateY(-50%) scaleX(0.98);transform-origin:0 50%;">Carbide Endmill</span></div>
<div class="bt" style="left:766px;top:86px;width:22px;height:16px;"></div>
<div class="T" style="left:478.0px;width:600px;text-align:center;top:95.3px"><span style="font:normal 11.01px/12.66px 'Liberation Sans',sans-serif;color:#1a1a1a;transform:translateY(-50%) scaleX(0.98);transform-origin:50% 50%;">...</span></div>
<div class="T" style="left:588px;top:117.5px"><span style="font:normal 10.16px/11.69px 'Liberation Sans',sans-serif;color:#141414;transform:translateY(-50%) scaleX(0.98);transform-origin:0 50%;">Crib</span></div>
<div class="cb" style="left:611px;top:109px;width:177px;height:16px;"><div class="cbb" style="width:14px;height:16px"><div class="tri"></div></div></div>
<div class="T" style="left:616px;top:118.8px"><span style="font:normal 10.16px/11.69px 'Liberation Sans',sans-serif;color:#0a0a0a;transform:translateY(-50%) scaleX(0.98);transform-origin:0 50%;">&lt;No Crib&gt;</span></div>
<div class="T" style="left:156px;top:153px"><span style="font:normal 10.16px/11.69px 'Liberation Sans',sans-serif;color:#141414;transform:translateY(-50%) scaleX(0.98);transform-origin:0 50%;">Tool Dia.</span></div>
<div class="sp" style="left:204px;top:143px;width:71px;height:17px;background:#fff;border-color:#707070"><div class="spb" style="width:13px;height:17px"><div class="up"></div><div class="dn"></div></div></div>
<div class="T" style="left:208px;top:153.7px"><span style="font:normal 10.16px/11.69px 'Liberation Sans',sans-serif;color:#0a0a0a;transform:translateY(-50%) scaleX(0.98);transform-origin:0 50%;">0.5</span></div>
<div class="T" style="left:283px;top:154.5px"><span style="font:normal 10.16px/11.69px 'Liberation Mono',monospace;color:#141414;transform:translateY(-50%) scaleX(0.98);transform-origin:0 50%;-webkit-text-stroke:0.25px currentColor;">in</span></div>
<div class="bt" style="left:299px;top:144px;width:55px;height:16px;"></div>
<div class="T" style="left:27.5px;width:600px;text-align:center;top:153.5px"><span style="font:normal 10.16px/11.69px 'Liberation Sans',sans-serif;color:#1a1a1a;transform:translateY(-50%) scaleX(0.98);transform-origin:50% 50%;">Sizes</span></div>
<div class="T" style="left:361px;top:152.5px"><span style="font:normal 10.16px/11.69px 'Liberation Sans',sans-serif;color:#141414;transform:translateY(-50%) scaleX(0.98);transform-origin:0 50%;">Flutes</span></div>
<div class="sp" style="left:393px;top:143px;width:39px;height:17px;background:#fff;border-color:#707070"><div class="spb" style="width:13px;height:17px"><div class="up"></div><div class="dn"></div></div></div>
<div class="T" style="left:397px;top:153.7px"><span style="font:normal 10.16px/11.69px 'Liberation Sans',sans-serif;color:#0a0a0a;transform:translateY(-50%) scaleX(0.98);transform-origin:0 50%;">3</span></div>
<div class="bt" style="left:439px;top:144px;width:135px;height:16px;"></div>
<div class="T" style="left:207.5px;width:600px;text-align:center;top:153.5px"><span style="font:normal 10.16px/11.69px 'Liberation Sans',sans-serif;color:#1a1a1a;transform:translateY(-50%) scaleX(0.98);transform-origin:50% 50%;">Geometry</span></div>
<div class="T" style="left:582px;top:152.5px"><span style="font:normal 10.16px/11.69px 'Liberation Sans',sans-serif;color:#141414;transform:translateY(-50%) scaleX(0.98);transform-origin:0 50%;">Stickout</span></div>
<div class="sp" style="left:627px;top:143px;width:70px;height:17px;background:#fff;border-color:#707070"><div class="spb" style="width:13px;height:17px"><div class="up"></div><div class="dn"></div></div></div>
<div class="T" style="left:631px;top:153.7px"><span style="font:normal 10.16px/11.69px 'Liberation Sans',sans-serif;color:#0a0a0a;transform:translateY(-50%) scaleX(0.98);transform-origin:0 50%;">2</span></div>
<div class="T" style="left:705px;top:154.5px"><span style="font:normal 10.16px/11.69px 'Liberation Mono',monospace;color:#141414;transform:translateY(-50%) scaleX(0.98);transform-origin:0 50%;-webkit-text-stroke:0.25px currentColor;">in</span></div>
<div class="T" style="left:83px;top:188px"><span style="font:normal 10.16px/11.69px 'Liberation Sans',sans-serif;color:#141414;transform:translateY(-50%) scaleX(0.98);transform-origin:0 50%;">Optional Mfg's Data:</span></div>
<div class="T" style="left:177px;top:188px"><span style="font:normal 10.16px/11.69px 'Liberation Sans',sans-serif;color:#141414;transform:translateY(-50%) scaleX(0.98);transform-origin:0 50%;">Sfc Speed</span></div>
<div class="sp" style="left:227px;top:179px;width:71px;height:17px;background:#e3dff9;border-color:#707070"><div class="spb" style="width:13px;height:17px"><div class="up"></div><div class="dn"></div></div></div>
<div class="T" style="left:231px;top:189.7px"><span style="font:normal 10.16px/11.69px 'Liberation Sans',sans-serif;color:#0a0a0a;transform:translateY(-50%) scaleX(0.98);transform-origin:0 50%;">500</span></div>
<div class="T" style="left:306px;top:189.5px"><span style="font:normal 10.16px/11.69px 'Liberation Mono',monospace;color:#141414;transform:translateY(-50%) scaleX(0.98);transform-origin:0 50%;-webkit-text-stroke:0.25px currentColor;">sfm</span></div>
<svg style="position:absolute;left:329px;top:181px" width="11" height="12" viewBox="0 0 11 12"><defs><linearGradient id="lg" x1="0" y1="0" x2="0" y2="1"><stop offset="0" stop-color="#f2d27a"/><stop offset="1" stop-color="#d4a434"/></linearGradient></defs><path d="M3.2 4.5 V3.4 A2.3 2.3 0 0 1 7.8 3.4 V4.5" fill="none" stroke="#c49a34" stroke-width="1.8"/><rect x="1" y="3.8" width="9" height="7.4" fill="url(#lg)" stroke="#a47c28" stroke-width="0.8"/></svg>
<div class="T" style="left:346px;top:188px"><span style="font:normal 10.16px/11.69px 'Liberation Sans',sans-serif;color:#141414;transform:translateY(-50%) scaleX(0.98);transform-origin:0 50%;">Chipload</span></div>
<div class="sp" style="left:392px;top:179px;width:70px;height:17px;background:#e3dff9;border-color:#4a86d8"><div class="spb" style="width:13px;height:17px"><div class="up"></div><div class="dn"></div></div></div>
<div class="T" style="left:396px;top:189.7px"><span style="font:normal 10.16px/11.69px 'Liberation Sans',sans-serif;color:#0a0a0a;transform:translateY(-50%) scaleX(0.98);transform-origin:0 50%;">0.006</span></div>
<div style="position:absolute;left:421px;top:183px;width:1px;height:12px;background:#111;"></div>
<div class="T" style="left:471px;top:189.5px"><span style="font:normal 10.16px/11.69px 'Liberation Mono',monospace;color:#141414;transform:translateY(-50%) scaleX(0.98);transform-origin:0 50%;-webkit-text-stroke:0.25px currentColor;">ipt</span></div>
<svg style="position:absolute;left:494px;top:181px" width="11" height="12" viewBox="0 0 11 12"><defs><linearGradient id="lg" x1="0" y1="0" x2="0" y2="1"><stop offset="0" stop-color="#f2d27a"/><stop offset="1" stop-color="#d4a434"/></linearGradient></defs><path d="M3.2 4.5 V3.4 A2.3 2.3 0 0 1 7.8 3.4 V4.5" fill="none" stroke="#c49a34" stroke-width="1.8"/><rect x="1" y="3.8" width="9" height="7.4" fill="url(#lg)" stroke="#a47c28" stroke-width="0.8"/></svg>
<div class="T" style="left:511px;top:188px"><span style="font:normal 10.16px/11.69px 'Liberation Sans',sans-serif;color:#141414;transform:translateY(-50%) scaleX(0.98);transform-origin:0 50%;">Family:</span></div>
<div class="cb" style="left:542px;top:179px;width:246px;height:17px;background:#fff;"><div class="cbb" style="width:14px;height:17px"><div class="tri"></div></div></div>
<div class="T" style="left:545.5px;top:189.3px"><span style="font:normal 10.16px/11.69px 'Liberation Sans',sans-serif;color:#0a0a0a;transform:translateY(-50%) scaleX(0.98);transform-origin:0 50%;">Generic</span></div>
<div class="T" style="left:208px;top:223.5px"><span style="font:normal 10.16px/11.69px 'Liberation Sans',sans-serif;color:#141414;transform:translateY(-50%) scaleX(1.02);transform-origin:0 50%;">Mini-Calcs</span></div>
<div class="bt" style="left:261px;top:215px;width:79px;height:15px;border-color:#9c9c9c;background:linear-gradient(#e8e8e8,#d4d4d4);"></div>
<div class="T" style="left:1.5px;width:600px;text-align:center;top:224.0px"><span style="font:normal 10.16px/11.69px 'Liberation Sans',sans-serif;color:#8c8c8c;transform:translateY(-50%) scaleX(0.98);transform-origin:50% 50%;">Surface Finish</span></div>
<div class="bt" style="left:347px;top:215px;width:55px;height:15px;"></div>
<div class="T" style="left:75.5px;width:600px;text-align:center;top:224.0px"><span style="font:normal 10.16px/11.69px 'Liberation Sans',sans-serif;color:#1a1a1a;transform:translateY(-50%) scaleX(0.98);transform-origin:50% 50%;">Helix</span></div>
<div class="bt" style="left:409px;top:215px;width:54px;height:15px;"></div>
<div class="T" style="left:137.0px;width:600px;text-align:center;top:224.0px"><span style="font:normal 10.16px/11.69px 'Liberation Sans',sans-serif;color:#1a1a1a;transform:translateY(-50%) scaleX(0.98);transform-origin:50% 50%;">Ramp</span></div>
<div class="bt" style="left:470px;top:215px;width:54px;height:15px;"></div>
<div class="T" style="left:198.0px;width:600px;text-align:center;top:224.0px"><span style="font:normal 10.16px/11.69px 'Liberation Sans',sans-serif;color:#1a1a1a;transform:translateY(-50%) scaleX(0.98);transform-origin:50% 50%;">Plunge</span></div>
<div class="bt" style="left:532px;top:215px;width:54px;height:15px;"></div>
<div class="T" style="left:260.0px;width:600px;text-align:center;top:224.0px"><span style="font:normal 10.16px/11.69px 'Liberation Sans',sans-serif;color:#1a1a1a;transform:translateY(-50%) scaleX(0.98);transform-origin:50% 50%;">Vacuum</span></div>
<div style="position:absolute;left:593px;top:219px;width:9px;height:9px;border:1px solid #9c9c9c;background:linear-gradient(#e4e4e4,#d0d0d0);"></div>
<div class="T" style="left:608.5px;top:224.6px"><span style="font:normal 9.83px/11.30px 'Liberation Sans',sans-serif;color:#5c5c5c;transform:translateY(-50%) scaleX(0.93);transform-origin:0 50%;letter-spacing:0.35px">TSC</span></div>
<div style="position:absolute;left:632px;top:219px;width:9px;height:9px;border:1px solid #9c9c9c;background:linear-gradient(#e4e4e4,#d0d0d0);"></div>
<div class="T" style="left:646.5px;top:224.6px"><span style="font:normal 9.83px/11.30px 'Liberation Sans',sans-serif;color:#5c5c5c;transform:translateY(-50%) scaleX(0.93);transform-origin:0 50%;letter-spacing:0.35px">PCN</span></div>
<div class="T" style="left:83px;top:258px"><span style="font:normal 10.16px/11.69px 'Liberation Sans',sans-serif;color:#141414;transform:translateY(-50%) scaleX(0.98);transform-origin:0 50%;">Cut Depth</span></div>
<div class="sp" style="left:138px;top:249px;width:71px;height:17px;background:#fff;border-color:#707070"><div class="spb" style="width:13px;height:17px"><div class="up"></div><div class="dn"></div></div></div>
<div class="T" style="left:142px;top:259.7px"><span style="font:normal 10.16px/11.69px 'Liberation Sans',sans-serif;color:#0a0a0a;transform:translateY(-50%) scaleX(0.98);transform-origin:0 50%;">0.125</span></div>
<div class="T" style="left:216px;top:259.5px"><span style="font:normal 10.16px/11.69px 'Liberation Mono',monospace;color:#141414;transform:translateY(-50%) scaleX(0.98);transform-origin:0 50%;-webkit-text-stroke:0.25px currentColor;">in</span></div>
<div style="position:absolute;left:232px;top:249px;width:16px;height:17px;border:1px solid #4a4a4a;border-radius:2px;background:#fff"></div>
<svg style="position:absolute;left:234px;top:250px" width="15" height="15" viewBox="0 0 15 15"><circle cx="7.5" cy="8" r="6.3" fill="#d4c8c8"/><path d="M1.2 8.6 A6.3 6.3 0 0 1 13.8 8.6 Z" fill="#141414"/><path d="M2.6 8.2 A4.9 4.9 0 0 1 6 3.3" stroke="#38b038" stroke-width="2" fill="none"/><path d="M6 3.3 A4.9 4.9 0 0 1 10.2 3.9" stroke="#e2cc3a" stroke-width="2" fill="none"/><circle cx="11" cy="6.6" r="1.7" fill="#e02424"/><ellipse cx="7.5" cy="11.6" rx="3" ry="1.3" fill="#e08080" fill-opacity="0.8"/></svg>
<div class="T" style="left:255px;top:258px"><span style="font:normal 10.16px/11.69px 'Liberation Sans',sans-serif;color:#141414;transform:translateY(-50%) scaleX(0.98);transform-origin:0 50%;">Axial Engage.: 25%</span></div>
<div class="T" style="left:409px;top:258px"><span style="font:normal 10.16px/11.69px 'Liberation Sans',sans-serif;color:#141414;transform:translateY(-50%) scaleX(0.98);transform-origin:0 50%;">Cut Width</span></div>
<div class="sp" style="left:463px;top:249px;width:71px;height:17px;background:#fff;border-color:#707070"><div class="spb" style="width:13px;height:17px"><div class="up"></div><div class="dn"></div></div></div>
<div class="T" style="left:467px;top:259.7px"><span style="font:normal 10.16px/11.69px 'Liberation Sans',sans-serif;color:#0a0a0a;transform:translateY(-50%) scaleX(0.98);transform-origin:0 50%;">0.5</span></div>
<div class="T" style="left:541px;top:259.5px"><span style="font:normal 10.16px/11.69px 'Liberation Mono',monospace;color:#141414;transform:translateY(-50%) scaleX(0.98);transform-origin:0 50%;-webkit-text-stroke:0.25px currentColor;">in</span></div>
<div style="position:absolute;left:557px;top:249px;width:16px;height:17px;border:1px solid #4a4a4a;border-radius:2px;background:#fff"></div>
<svg style="position:absolute;left:559px;top:250px" width="15" height="15" viewBox="0 0 15 15"><circle cx="7.5" cy="8" r="6.3" fill="#d4c8c8"/><path d="M1.2 8.6 A6.3 6.3 0 0 1 13.8 8.6 Z" fill="#141414"/><path d="M2.6 8.2 A4.9 4.9 0 0 1 6 3.3" stroke="#38b038" stroke-width="2" fill="none"/><path d="M6 3.3 A4.9 4.9 0 0 1 10.2 3.9" stroke="#e2cc3a" stroke-width="2" fill="none"/><circle cx="11" cy="6.6" r="1.7" fill="#e02424"/><ellipse cx="7.5" cy="11.6" rx="3" ry="1.3" fill="#e08080" fill-opacity="0.8"/></svg>
<div class="bt" style="left:580px;top:249px;width:55px;height:16px;"></div>
<div class="T" style="left:308.5px;width:600px;text-align:center;top:258.5px"><span style="font:normal 10.16px/11.69px 'Liberation Sans',sans-serif;color:#1a1a1a;transform:translateY(-50%) scaleX(0.98);transform-origin:50% 50%;">Slot</span></div>
<div class="T" style="left:642px;top:258px"><span style="font:normal 10.16px/11.69px 'Liberation Sans',sans-serif;color:#141414;transform:translateY(-50%) scaleX(0.98);transform-origin:0 50%;">Radial Engage.: 100%</span></div>
<div style="position:absolute;left:320px;top:277px;width:1px;height:104px;background:#3f8ec2;"></div>
<div style="position:absolute;left:607px;top:277px;width:1px;height:104px;background:#3f8ec2;"></div>
<div class="T" style="right:660px;top:294px"><span style="font:normal 10.16px/11.69px 'Liberation Sans',sans-serif;color:#141414;transform:translateY(-50%) scaleX(0.98);transform-origin:100% 50%;">HP Limit</span></div>
<div class="sp" style="left:149px;top:284px;width:71px;height:17px;background:#fff;border-color:#707070"><div class="spb" style="width:13px;height:17px"><div class="up"></div><div class="dn"></div></div></div>
<div class="T" style="left:153px;top:294.7px"><span style="font:normal 10.16px/11.69px 'Liberation Sans',sans-serif;color:#0a0a0a;transform:translateY(-50%) scaleX(0.98);transform-origin:0 50%;">30</span></div>
<div class="T" style="left:226px;top:296px"><span style="font:normal 10.16px/11.69px 'Liberation Mono',monospace;color:#141414;transform:translateY(-50%) scaleX(0.98);transform-origin:0 50%;-webkit-text-stroke:0.25px currentColor;">hp</span></div>
<div class="T" style="right:509.5px;top:294px"><span style="font:normal 10.16px/11.69px 'Liberation Sans',sans-serif;color:#141414;transform:translateY(-50%) scaleX(0.98);transform-origin:100% 50%;">2%</span></div>
<div class="T" style="right:660px;top:317px"><span style="font:normal 10.16px/11.69px 'Liberation Sans',sans-serif;color:#141414;transform:translateY(-50%) scaleX(0.98);transform-origin:100% 50%;">RPM Limit</span></div>
<div class="sp" style="left:149px;top:308px;width:71px;height:16px;background:#fff;border-color:#707070"><div class="spb" style="width:13px;height:16px"><div class="up"></div><div class="dn"></div></div></div>
<div class="T" style="left:153px;top:318.2px"><span style="font:normal 10.16px/11.69px 'Liberation Sans',sans-serif;color:#0a0a0a;transform:translateY(-50%) scaleX(0.98);transform-origin:0 50%;">8100</span></div>
<div class="T" style="right:499px;top:317px"><span style="font:normal 10.16px/11.69px 'Liberation Sans',sans-serif;color:#141414;transform:translateY(-50%) scaleX(0.98);transform-origin:100% 50%;">44%</span></div>
<div class="T" style="right:660px;top:341px"><span style="font:normal 10.16px/11.69px 'Liberation Sans',sans-serif;color:#141414;transform:translateY(-50%) scaleX(0.98);transform-origin:100% 50%;">Min RPM</span></div>
<div class="sp" style="left:149px;top:332px;width:71px;height:16px;background:#fff;border-color:#707070"><div class="spb" style="width:13px;height:16px"><div class="up"></div><div class="dn"></div></div></div>
<div class="T" style="left:153px;top:342.2px"><span style="font:normal 10.16px/11.69px 'Liberation Sans',sans-serif;color:#0a0a0a;transform:translateY(-50%) scaleX(0.98);transform-origin:0 50%;">0</span></div>
<div class="T" style="right:660px;top:364px"><span style="font:normal 10.16px/11.69px 'Liberation Sans',sans-serif;color:#141414;transform:translateY(-50%) scaleX(0.98);transform-origin:100% 50%;">Feed Limit</span></div>
<div class="sp" style="left:149px;top:355px;width:71px;height:16px;background:#fff;border-color:#707070"><div class="spb" style="width:13px;height:16px"><div class="up"></div><div class="dn"></div></div></div>
<div class="T" style="left:153px;top:365.2px"><span style="font:normal 10.16px/11.69px 'Liberation Sans',sans-serif;color:#0a0a0a;transform:translateY(-50%) scaleX(0.98);transform-origin:0 50%;">650</span></div>
<div class="T" style="left:226px;top:366px"><span style="font:normal 10.16px/11.69px 'Liberation Mono',monospace;color:#141414;transform:translateY(-50%) scaleX(0.98);transform-origin:0 50%;-webkit-text-stroke:0.25px currentColor;">ipm</span></div>
<div class="T" style="right:499px;top:364px"><span style="font:normal 10.16px/11.69px 'Liberation Sans',sans-serif;color:#141414;transform:translateY(-50%) scaleX(0.98);transform-origin:100% 50%;">10%</span></div>
<div class="T" style="left:329px;top:293px"><span style="font:normal 10.16px/11.69px 'Liberation Sans',sans-serif;color:#141414;transform:translateY(-50%) scaleX(0.98);transform-origin:0 50%;">Surface Speed</span></div>
<div class="sp" style="left:485px;top:284px;width:71px;height:17px;background:#fff;border-color:#707070"><div class="spb" style="width:13px;height:17px"><div class="up"></div><div class="dn"></div></div></div>
<div class="T" style="left:489px;top:294.7px"><span style="font:normal 10.16px/11.69px 'Liberation Sans',sans-serif;color:#0a0a0a;transform:translateY(-50%) scaleX(0.98);transform-origin:0 50%;">475</span></div>
<div class="T" style="left:563px;top:295px"><span style="font:normal 10.16px/11.69px 'Liberation Mono',monospace;color:#141414;transform:translateY(-50%) scaleX(0.98);transform-origin:0 50%;-webkit-text-stroke:0.25px currentColor;">sfm</span></div>
<div class="T" style="left:329px;top:316.5px"><span style="font:normal 10.16px/11.69px 'Liberation Sans',sans-serif;color:#141414;transform:translateY(-50%) scaleX(0.98);transform-origin:0 50%;">Chipload</span></div>
<div class="sp" style="left:485px;top:308px;width:71px;height:17px;background:#fff;border-color:#707070"><div class="spb" style="width:13px;height:17px"><div class="up"></div><div class="dn"></div></div></div>
<div class="T" style="left:489px;top:318.7px"><span style="font:normal 10.16px/11.69px 'Liberation Sans',sans-serif;color:#0a0a0a;transform:translateY(-50%) scaleX(0.98);transform-origin:0 50%;">0.006</span></div>
<div class="T" style="left:563px;top:318.5px"><span style="font:normal 10.16px/11.69px 'Liberation Mono',monospace;color:#141414;transform:translateY(-50%) scaleX(0.98);transform-origin:0 50%;-webkit-text-stroke:0.25px currentColor;">ipt</span></div>
<div class="T" style="left:329px;top:338.5px"><span style="font:normal 10.16px/11.69px 'Liberation Sans',sans-serif;color:#141414;transform:translateY(-50%) scaleX(0.98);transform-origin:0 50%;">Adj. Chipload</span></div>
<div class="T" style="right:204px;top:338.5px"><span style="font:normal 10.16px/11.69px 'Liberation Sans',sans-serif;color:#141414;transform:translateY(-50%) scaleX(0.98);transform-origin:100% 50%;">0.006</span></div>
<div class="T" style="left:616px;top:292px"><span style="font:normal 10.16px/11.69px 'Liberation Sans',sans-serif;color:#141414;transform:translateY(-50%) scaleX(0.98);transform-origin:0 50%;">MRR (ci)</span></div>
<div class="T" style="right:12px;top:292px"><span style="font:normal 10.16px/11.69px 'Liberation Sans',sans-serif;color:#141414;transform:translateY(-50%) scaleX(0.98);transform-origin:100% 50%;">4.0826</span></div>
<div class="T" style="left:616px;top:312.5px"><span style="font:normal 10.16px/11.69px 'Liberation Sans',sans-serif;color:#141414;transform:translateY(-50%) scaleX(0.98);transform-origin:0 50%;">HP</span></div>
<div class="T" style="right:12px;top:312.5px"><span style="font:normal 10.16px/11.69px 'Liberation Sans',sans-serif;color:#141414;transform:translateY(-50%) scaleX(0.98);transform-origin:100% 50%;">0.8701</span></div>
<div class="T" style="left:616px;top:334px"><span style="font:normal 10.16px/11.69px 'Liberation Sans',sans-serif;color:#141414;transform:translateY(-50%) scaleX(0.98);transform-origin:0 50%;">Deflection</span></div>
<div class="T" style="right:12px;top:334px"><span style="font:normal 10.16px/11.69px 'Liberation Sans',sans-serif;color:#141414;transform:translateY(-50%) scaleX(0.98);transform-origin:100% 50%;">0.000903</span></div>
<div class="T" style="left:616px;top:356.5px"><span style="font:normal 10.16px/11.69px 'Liberation Sans',sans-serif;color:#141414;transform:translateY(-50%) scaleX(0.98);transform-origin:0 50%;">Torque</span></div>
<div class="sp" style="left:657px;top:347px;width:71px;height:18px;background:#fff;border-color:#707070"><div class="spb" style="width:13px;height:18px"><div class="up"></div><div class="dn"></div></div></div>
<div class="T" style="left:661px;top:358.2px"><span style="font:normal 10.16px/11.69px 'Liberation Sans',sans-serif;color:#0a0a0a;transform:translateY(-50%) scaleX(0.98);transform-origin:0 50%;">241.79</span></div>
<div class="T" style="left:236px;top:397px"><span style="font:normal 10.16px/11.69px 'Liberation Sans',sans-serif;color:#141414;transform:translateY(-50%) scaleX(0.98);transform-origin:0 50%;">Use HSM Feeds and Speeds</span></div>
<div style="position:absolute;left:371px;top:393px;width:9px;height:9px;border:1px solid #7a7a7a;background:linear-gradient(#fdfdfd,#dedede);"></div>
<div class="T" style="left:396px;top:397px"><span style="font:normal 10.16px/11.69px 'Liberation Sans',sans-serif;color:#141414;transform:translateY(-50%) scaleX(0.96);transform-origin:0 50%;">RPM Factor: 1.19</span></div>
<div class="T" style="left:477px;top:397px"><span style="font:normal 10.16px/11.69px 'Liberation Sans',sans-serif;color:#141414;transform:translateY(-50%) scaleX(0.96);transform-origin:0 50%;">Feedrate Factor: 1.22</span></div>
<div class="T" style="left:576px;top:397px"><span style="font:normal 10.16px/11.69px 'Liberation Sans',sans-serif;color:#141414;transform:translateY(-50%) scaleX(0.98);transform-origin:0 50%;">Eff. Diam.: 0.5</span></div>
<div class="T" style="left:238px;top:419px"><span style="font:normal 10.16px/11.69px 'Liberation Sans',sans-serif;color:#141414;transform:translateY(-50%) scaleX(0.98);transform-origin:0 50%;">Tool Engagement Angle (0-180)</span></div>
<div class="sp" style="left:389px;top:410px;width:71px;height:17px;background:#fff;border-color:#707070"><div class="spb" style="width:13px;height:17px"><div class="up"></div><div class="dn"></div></div></div>
<div class="T" style="left:393px;top:420.7px"><span style="font:normal 10.16px/11.69px 'Liberation Sans',sans-serif;color:#0a0a0a;transform:translateY(-50%) scaleX(0.98);transform-origin:0 50%;">180</span></div>
<div class="bt" style="left:485px;top:411px;width:54px;height:15px;"></div>
<div class="T" style="left:213.0px;width:600px;text-align:center;top:420.0px"><span style="font:normal 10.16px/11.69px 'Liberation Sans',sans-serif;color:#1a1a1a;transform:translateY(-50%) scaleX(0.98);transform-origin:50% 50%;">Est. TEA</span></div>
<div class="T" style="left:546px;top:419px"><span style="font:normal 10.16px/11.69px 'Liberation Sans',sans-serif;color:#141414;transform:translateY(-50%) scaleX(0.98);transform-origin:0 50%;">Corner Adjust 100%</span></div>
<div style="position:absolute;left:399px;top:438px;width:2px;height:71px;background:#5b9cc4;"></div>
<div class="T" style="left:82px;top:454.5px"><span style="font:normal 10.16px/11.69px 'Liberation Sans',sans-serif;color:#141414;transform:translateY(-50%) scaleX(0.98);transform-origin:0 50%;">3 Tips:</span></div>
<div class="cb" style="left:117px;top:446px;width:273px;height:15px;"><div class="cbb" style="width:14px;height:15px"><div class="tri"></div></div></div>
<div class="T" style="left:125.5px;top:455.3px"><span style="font:normal 10.16px/11.69px 'Liberation Sans',sans-serif;color:#0a0a0a;transform:translateY(-50%) scaleX(0.98);transform-origin:0 50%;">Use Conventional Milling</span></div>
<div class="bt" style="left:201px;top:468px;width:70px;height:14px;"></div>
<div class="T" style="left:-63.0px;width:600px;text-align:center;top:476.5px"><span style="font:normal 10.16px/11.69px 'Liberation Sans',sans-serif;color:#1a1a1a;transform:translateY(-50%) scaleX(0.98);transform-origin:50% 50%;">Cheat Sheet</span></div>
<div style="position:absolute;left:459px;top:446px;width:280px;height:55px;background:#000;border-radius:3px"></div>
<div class="T" style="left:464px;top:468px"><span style="font:normal 8.47px/9.74px 'Liberation Sans',sans-serif;color:#e8e8e8;transform:translateY(-50%) scaleX(0.95);transform-origin:0 50%;letter-spacing:0.3px;-webkit-text-stroke:0">Conservative</span></div>
<div class="T" style="left:692px;top:469px"><span style="font:normal 8.47px/9.74px 'Liberation Sans',sans-serif;color:#e8e8e8;transform:translateY(-50%) scaleX(0.95);transform-origin:0 50%;letter-spacing:0.3px;-webkit-text-stroke:0">Aggressive</span></div>
<div style="position:absolute;left:563px;top:468px;width:76px;height:2px;background:#d8d8d8;"></div>
<div style="position:absolute;left:635px;top:465px;width:8px;height:8px;background:radial-gradient(circle at 40% 35%,#f4f4f4,#c8c8c8);border-radius:50%;"></div>
<div class="T" style="left:299px;width:600px;text-align:center;top:491.5px"><span style="font:normal 10.16px/11.69px 'Liberation Sans',sans-serif;color:#f0f0f0;transform:translateY(-50%) scaleX(0.98);transform-origin:50% 50%;">100%:Rough</span></div>
<svg style="position:absolute;left:514px;top:452px" width="48" height="32" viewBox="0 0 800 533"><g fill="#fff"><path d="M85,125 Q110,95 170,105 Q230,120 250,150 Q215,200 195,215 Q120,195 90,165 Q75,145 85,125 Z"/><path d="M320,135 L425,105 L440,120 L420,180 L340,190 L318,160 Z"/><path d="M450,120 L540,130 L565,160 L545,210 L470,215 L445,190 Z"/><path d="M575,150 Q640,180 665,245 L610,265 L570,215 Z"/><path d="M245,195 L320,180 L340,215 L325,265 L270,255 L240,220 Z"/><path d="M360,205 L440,190 L465,230 L450,305 L375,300 L350,260 Z"/><path d="M490,235 L560,225 L590,270 L585,330 L500,320 L475,290 Z"/><path d="M605,290 L665,280 L695,320 L690,335 L600,330 Z"/><path d="M665,250 L690,260 L700,285 L675,280 Z"/><path d="M190,245 Q220,230 245,250 Q300,320 360,425 Q350,450 320,440 Q220,360 190,290 Q180,260 190,245 Z"/><path d="M615,350 L700,350 Q735,380 720,420 Q690,450 650,435 Q615,400 615,350 Z"/></g></svg>
<svg style="position:absolute;left:644px;top:450px" width="48" height="36" viewBox="0 0 800 600"><path fill="#fff" d="M95,385 Q90,355 130,365 Q170,260 260,215 Q330,195 420,220 Q470,235 490,270 L470,175 Q455,95 490,90 Q520,100 545,160 L560,190 Q600,120 660,85 Q650,150 600,230 Q690,280 710,360 Q700,395 640,395 L600,400 Q600,440 580,450 L600,490 Q590,510 540,505 L440,510 Q410,470 380,490 L320,500 Q300,520 220,520 Q180,490 150,455 Q95,440 95,385 Z"/><path d="M490,295 Q520,370 590,395" stroke="#000" stroke-width="20" fill="none"/><circle cx="615" cy="295" r="16" fill="#555"/></svg>
<div class="T" style="left:83px;top:527.5px"><span style="font:bold 11.86px/13.64px 'Liberation Sans',sans-serif;color:#111;transform:translateY(-50%) scaleX(1.04);transform-origin:0 50%;">RPM</span></div>
<div class="sp" style="left:118px;top:518px;width:71px;height:18px;background:#fff;border-color:#707070"><div class="spb" style="width:13px;height:18px"><div class="up"></div><div class="dn"></div></div></div>
<div class="T" style="left:122px;top:529.2px"><span style="font:bold 11.01px/12.66px 'Liberation Sans',sans-serif;color:#0a0a0a;transform:translateY(-50%) scaleX(0.98);transform-origin:0 50%;">3629</span></div>
<div class="T" style="left:213px;top:527.5px"><span style="font:bold 11.86px/13.64px 'Liberation Sans',sans-serif;color:#111;transform:translateY(-50%) scaleX(1.02);transform-origin:0 50%;">Feedrate</span></div>
<div class="sp" style="left:272px;top:518px;width:71px;height:18px;background:#fff;border-color:#707070"><div class="spb" style="width:13px;height:18px"><div class="up"></div><div class="dn"></div></div></div>
<div class="T" style="left:276px;top:529.2px"><span style="font:bold 11.01px/12.66px 'Liberation Sans',sans-serif;color:#0a0a0a;transform:translateY(-50%) scaleX(0.98);transform-origin:0 50%;">65.322</span></div>
<div class="T" style="left:350px;top:529.2px"><span style="font:normal 10.59px/12.18px 'Liberation Mono',monospace;color:#141414;transform:translateY(-50%) scaleX(0.98);transform-origin:0 50%;-webkit-text-stroke:0.25px currentColor;">ipm</span></div>
<div class="T" style="left:392px;top:528px"><span style="font:normal 10.16px/11.69px 'Liberation Sans',sans-serif;color:#333;transform:translateY(-50%) scaleX(0.98);transform-origin:0 50%;">IPR</span></div>
<div style="position:absolute;left:413px;top:518px;width:30px;height:20px;overflow:hidden">
<div class="T" style="left:-3.0px;top:10.4px"><span style="font:normal 10.16px/11.69px 'Liberation Sans',sans-serif;color:#2a2a2a;transform:translateY(-50%) scaleX(1.04);transform-origin:0 50%;">0.018</span></div>
</div>
<div class="cb" style="left:492px;top:519px;width:89px;height:16px;"><div class="cbb" style="width:14px;height:16px"><div class="tri"></div></div></div>
<div class="T" style="left:498px;top:528.8px"><span style="font:normal 10.16px/11.69px 'Liberation Sans',sans-serif;color:#0a0a0a;transform:translateY(-50%) scaleX(0.98);transform-origin:0 50%;">Plunge</span></div>
<div class="T" style="left:608px;top:528.5px"><span style="font:normal 11.01px/12.66px 'Liberation Sans',sans-serif;color:#141414;transform:translateY(-50%) scaleX(1.04);transform-origin:0 50%;">21.8</span></div>
<div class="cb" style="left:638px;top:519px;width:88px;height:15px;"><div class="cbb" style="width:14px;height:15px"><div class="tri"></div></div></div>
<div class="T" style="left:644px;top:528.3px"><span style="font:normal 10.16px/11.69px 'Liberation Sans',sans-serif;color:#0a0a0a;transform:translateY(-50%) scaleX(0.98);transform-origin:0 50%;">Normal</span></div>
<div class="bt" style="left:733px;top:519px;width:54px;height:15px;"></div>
<div class="T" style="left:461.0px;width:600px;text-align:center;top:528.0px"><span style="font:normal 10.16px/11.69px 'Liberation Sans',sans-serif;color:#1a1a1a;transform:translateY(-50%) scaleX(0.98);transform-origin:50% 50%;">Simplify</span></div>
<div class="bt" style="left:179px;top:555px;width:112px;height:17px;"></div>
<div class="T" style="left:-64.0px;width:600px;text-align:center;top:565.0px"><span style="font:normal 10.16px/11.69px 'Liberation Sans',sans-serif;color:#1a1a1a;transform:translateY(-50%) scaleX(0.98);transform-origin:50% 50%;">Search Cut KB</span></div>
<div class="bt" style="left:306px;top:555px;width:112px;height:17px;"></div>
<div class="T" style="left:63.0px;width:600px;text-align:center;top:565.0px"><span style="font:normal 10.16px/11.69px 'Liberation Sans',sans-serif;color:#1a1a1a;transform:translateY(-50%) scaleX(0.98);transform-origin:50% 50%;">Add to Cut KB</span></div>
<div class="bt" style="left:581px;top:555px;width:112px;height:17px;"></div>
<div class="T" style="left:338.0px;width:600px;text-align:center;top:565.0px"><span style="font:normal 10.16px/11.69px 'Liberation Sans',sans-serif;color:#1a1a1a;transform:translateY(-50%) scaleX(0.98);transform-origin:50% 50%;">Reset to Defaults</span></div>
<div style="position:absolute;left:1px;top:587px;width:798px;height:20px;background:#e1e1e1;border-top:1px solid #3a8ad0;box-sizing:border-box;"></div>
<div style="position:absolute;left:1px;top:588px;width:797px;height:1px;background:#f0f0f0;"></div>
<div style="position:absolute;left:797px;top:588px;width:1px;height:19px;background:#f4f4f4;"></div>
<div class="T" style="left:33px;top:598.2px"><span style="font:normal 8.47px/9.74px 'Liberation Sans',sans-serif;color:#5a5a5a;transform:translateY(-50%) scaleX(1.0);transform-origin:0 50%;">Inches</span></div>
<div class="T" style="left:83px;top:598.2px"><span style="font:normal 8.47px/9.74px 'Liberation Sans',sans-serif;color:#5a5a5a;transform:translateY(-50%) scaleX(1.0);transform-origin:0 50%;">Last Connect: 0 days / 0 fails</span></div>
<div class="T" style="left:202px;top:598.2px"><span style="font:normal 8.47px/9.74px 'Liberation Sans',sans-serif;color:#5a5a5a;transform:translateY(-50%) scaleX(1.0);transform-origin:0 50%;">Screen: 985x718</span></div>
<div style="position:absolute;left:0px;top:0px;width:1px;height:608px;background:#2b87d6;"></div>
<div style="position:absolute;left:799px;top:0px;width:1px;height:608px;background:#2b87d6;"></div>
<div style="position:absolute;left:798px;top:0px;width:1px;height:608px;background:rgba(43,135,214,0.45);"></div>
<div style="position:absolute;left:797px;top:78px;width:1px;height:509px;background:rgba(240,232,220,0.5);"></div>
<div style="position:absolute;left:0px;top:0px;width:800px;height:1px;background:#2b87d6;"></div>
<div style="position:absolute;left:0px;top:607px;width:800px;height:1px;background:#2b87d6;"></div></div></body></html>
